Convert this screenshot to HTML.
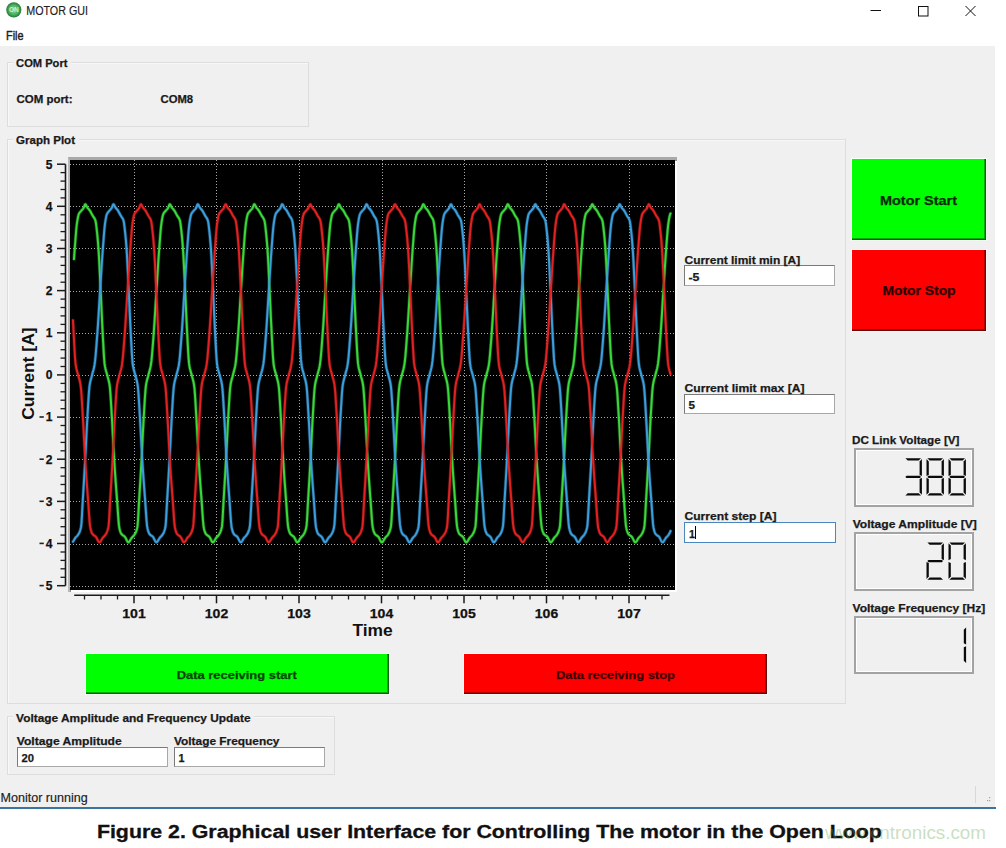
<!DOCTYPE html>
<html><head><meta charset="utf-8"><title>MOTOR GUI</title>
<style>
*{margin:0;padding:0;box-sizing:border-box}
html,body{width:1006px;height:848px;overflow:hidden;background:#fff}
body{position:relative;font-family:"Liberation Sans", sans-serif}
.a{position:absolute}
.win{left:0;top:46px;width:995px;height:761px;background:#f0f0f0}
.grp{border:1px solid #dddddd;box-shadow:inset 1px 1px 0 #f8f8f8}
.edit{background:#fff;border:1px solid #7a7a7a;border-bottom-color:#a8a8a8;border-right-color:#a8a8a8}
.btn-g{background:#00ff00;border-right:1px solid #006400;border-bottom:1px solid #006400;box-shadow:inset -1px -1px 0 #00a800, 0 0 0 1px #f8fff8}
.btn-r{background:#ff0000;border-right:1px solid #6a0000;border-bottom:1px solid #6a0000;box-shadow:inset -1px -1px 0 #b00000, 0 0 0 1px #fff8f8}
.lcd{border:2px solid #a3a3a3;box-shadow:inset 1px 1px 0 #fff, inset -1px -1px 0 #fff}
svg{position:absolute;left:0;top:0}
svg text{font-family:"Liberation Sans", sans-serif}
</style></head><body>
<div class="a win"></div>
<div class="a" style="left:0;top:807px;width:996px;height:2px;background:#3a74a0"></div>
<!-- group boxes -->
<div class="a grp" style="left:7px;top:62px;width:302px;height:65px"></div>
<div class="a grp" style="left:7px;top:139px;width:839px;height:565px"></div>
<div class="a grp" style="left:7px;top:716px;width:328px;height:59px"></div>
<!-- title gaps for group box labels -->
<div class="a" style="left:13px;top:56px;width:58px;height:12px;background:#f0f0f0"></div>
<div class="a" style="left:13px;top:133px;width:66px;height:12px;background:#f0f0f0"></div>
<div class="a" style="left:13px;top:710px;width:241px;height:12px;background:#f0f0f0"></div>
<!-- edits -->
<div class="a edit" style="left:684px;top:265px;width:151px;height:21px"></div>
<div class="a edit" style="left:684px;top:394px;width:151px;height:20px"></div>
<div class="a edit" style="left:684px;top:522px;width:152px;height:21px;border:1px solid #4a86bf"></div>
<div class="a edit" style="left:17px;top:747px;width:151px;height:20px"></div>
<div class="a edit" style="left:174px;top:747px;width:151px;height:20px"></div>
<!-- buttons -->
<div class="a btn-g" style="left:852px;top:159px;width:134px;height:81px"></div>
<div class="a btn-r" style="left:852px;top:250px;width:134px;height:81px"></div>
<div class="a btn-g" style="left:86px;top:654px;width:303px;height:40px"></div>
<div class="a btn-r" style="left:464px;top:654px;width:303px;height:40px"></div>
<!-- lcds -->
<div class="a lcd" style="left:854px;top:448px;width:120px;height:59px"></div>
<div class="a lcd" style="left:854px;top:532px;width:120px;height:59px"></div>
<div class="a lcd" style="left:854px;top:616px;width:120px;height:58px"></div>
<!-- plot canvas frame -->
<div class="a" style="left:68px;top:157px;width:609px;height:435px;background:#fff;border-top:3px solid #a8a8a8;border-left:2px solid #b8b8b8;box-shadow:inset 1px 1px 0 #909090"></div>
<div class="a" style="left:70px;top:160px;width:605px;height:430px;background:#000"></div>
<svg width="1006" height="848" viewBox="0 0 1006 848">
<!-- title bar icon -->
<defs><radialGradient id="ig" cx="0.5" cy="0.5" r="0.5"><stop offset="0" stop-color="#8fd69a"/><stop offset="0.6" stop-color="#4fb463"/><stop offset="1" stop-color="#237a38"/></radialGradient></defs>
<circle cx="13.8" cy="9.8" r="7.6" fill="url(#ig)"/>
<text x="13.8" y="12.3" font-size="6.5" font-weight="bold" fill="#c8f0d0" text-anchor="middle">ON</text>
<!-- window buttons -->
<line x1="870.5" y1="10.5" x2="881" y2="10.5" stroke="#111" stroke-width="1"/>
<rect x="918.5" y="6.5" width="9.5" height="9.5" fill="none" stroke="#111" stroke-width="1"/>
<path d="M965.5 6 L975.5 16 M975.5 6 L965.5 16" stroke="#111" stroke-width="1" fill="none"/>
<!-- status grip -->
<line x1="975.5" y1="786" x2="975.5" y2="803" stroke="#d8d8d8" stroke-width="1"/>
<g fill="#a0a0a0"><rect x="989" y="797" width="1.2" height="1.2"/><rect x="987" y="800" width="1.2" height="1.2"/><rect x="989" y="800" width="1.2" height="1.2"/></g>
<!-- grid -->
<g stroke="#a8a8a8" stroke-width="1" stroke-dasharray="1 2" shape-rendering="crispEdges">
<line x1="70.0" y1="586.5" x2="675.0" y2="586.5"/>
<line x1="70.0" y1="544.5" x2="675.0" y2="544.5"/>
<line x1="70.0" y1="501.5" x2="675.0" y2="501.5"/>
<line x1="70.0" y1="459.5" x2="675.0" y2="459.5"/>
<line x1="70.0" y1="417.5" x2="675.0" y2="417.5"/>
<line x1="70.0" y1="375.5" x2="675.0" y2="375.5"/>
<line x1="70.0" y1="333.5" x2="675.0" y2="333.5"/>
<line x1="70.0" y1="291.5" x2="675.0" y2="291.5"/>
<line x1="70.0" y1="248.5" x2="675.0" y2="248.5"/>
<line x1="70.0" y1="206.5" x2="675.0" y2="206.5"/>
<line x1="70.0" y1="164.5" x2="675.0" y2="164.5"/>
<line x1="134.5" y1="160.0" x2="134.5" y2="590.0"/>
<line x1="216.5" y1="160.0" x2="216.5" y2="590.0"/>
<line x1="299.5" y1="160.0" x2="299.5" y2="590.0"/>
<line x1="382.5" y1="160.0" x2="382.5" y2="590.0"/>
<line x1="464.5" y1="160.0" x2="464.5" y2="590.0"/>
<line x1="546.5" y1="160.0" x2="546.5" y2="590.0"/>
<line x1="629.5" y1="160.0" x2="629.5" y2="590.0"/>
</g>
<!-- waveforms -->
<g fill="none" stroke-width="3.4" stroke-linejoin="round" stroke-linecap="round" opacity="0.35">
<path d="M74.0,259.1 L74.5,252.0 L75.0,245.4 L75.5,238.8 L76.0,232.5 L76.5,227.0 L77.0,222.9 L77.5,219.8 L78.0,217.0 L78.5,214.9 L79.0,213.7 L79.5,212.8 L80.0,212.2 L80.5,211.6 L81.0,211.1 L81.5,210.5 L82.0,209.9 L82.5,209.4 L83.0,208.8 L83.5,208.1 L84.0,207.1 L84.5,205.7 L85.0,204.5 L85.5,204.3 L86.0,204.9 L86.5,205.9 L87.0,207.0 L87.5,207.8 L88.0,208.4 L88.5,208.9 L89.0,209.5 L89.5,210.1 L90.0,210.8 L90.5,211.6 L91.0,212.5 L91.5,213.5 L92.0,214.4 L92.5,215.3 L93.0,216.2 L93.5,216.9 L94.0,217.6 L94.5,218.4 L95.0,219.4 L95.5,220.8 L96.0,223.5 L96.5,227.5 L97.0,232.0 L97.5,236.9 L98.0,242.5 L98.5,249.1 L99.0,257.2 L99.5,266.7 L100.0,277.0 L100.5,287.4 L101.0,297.8 L101.5,308.7 L102.0,319.7 L102.5,329.9 L103.0,339.2 L103.5,348.6 L104.0,357.0 L104.5,363.2 L105.0,366.5 L105.5,368.9 L106.0,370.8 L106.5,372.5 L107.0,374.3 L107.5,376.3 L108.0,378.1 L108.5,379.8 L109.0,381.9 L109.5,384.5 L110.0,388.4 L110.5,394.8 L111.0,402.7 L111.5,411.2 L112.0,419.5 L112.5,428.4 L113.0,438.1 L113.5,447.7 L114.0,456.7 L114.5,464.6 L115.0,472.1 L115.5,479.2 L116.0,486.1 L116.5,492.8 L117.0,499.3 L117.5,506.2 L118.0,513.7 L118.5,520.6 L119.0,525.9 L119.5,528.7 L120.0,530.6 L120.5,532.1 L121.0,533.3 L121.5,534.0 L122.0,534.6 L122.5,535.0 L123.0,535.4 L123.5,535.7 L124.0,536.0 L124.5,536.5 L125.0,537.0 L125.5,537.8 L126.0,538.7 L126.5,539.8 L127.0,540.8 L127.5,541.6 L128.0,542.2 L128.5,542.3 L129.0,542.0 L129.5,541.4 L130.0,540.7 L130.5,539.8 L131.0,538.9 L131.5,538.1 L132.0,537.5 L132.5,537.0 L133.0,536.5 L133.5,536.0 L134.0,535.3 L134.5,534.6 L135.0,533.8 L135.5,532.9 L136.0,531.8 L136.5,530.4 L137.0,528.7 L137.5,526.4 L138.0,520.7 L138.5,511.6 L139.0,502.3 L139.5,494.1 L140.0,485.9 L140.5,477.5 L141.0,469.0 L141.5,460.2 L142.0,450.8 L142.5,440.8 L143.0,430.8 L143.5,421.4 L144.0,413.0 L144.5,404.4 L145.0,396.3 L145.5,389.6 L146.0,385.2 L146.5,382.4 L147.0,380.2 L147.5,378.4 L148.0,376.7 L148.5,374.8 L149.0,372.8 L149.5,371.0 L150.0,369.1 L150.5,366.9 L151.0,364.1 L151.5,360.2 L152.0,355.2 L152.5,349.2 L153.0,342.8 L153.5,336.1 L154.0,329.4 L154.5,322.1 L155.0,314.1 L155.5,305.9 L156.0,297.8 L156.5,289.9 L157.0,282.1 L157.5,274.2 L158.0,266.5 L158.5,258.9 L159.0,251.8 L159.5,245.2 L160.0,238.6 L160.5,232.4 L161.0,226.9 L161.5,222.9 L162.0,219.7 L162.5,217.0 L163.0,214.9 L163.5,213.6 L164.0,212.8 L164.5,212.2 L165.0,211.6 L165.5,211.0 L166.0,210.5 L166.5,209.9 L167.0,209.4 L167.5,208.8 L168.0,208.1 L168.5,207.1 L169.0,205.7 L169.5,204.5 L170.0,204.3 L170.5,204.9 L171.0,205.9 L171.5,207.0 L172.0,207.8 L172.5,208.4 L173.0,208.9 L173.5,209.5 L174.0,210.1 L174.5,210.8 L175.0,211.6 L175.5,212.5 L176.0,213.5 L176.5,214.4 L177.0,215.4 L177.5,216.2 L178.0,216.9 L178.5,217.6 L179.0,218.4 L179.5,219.5 L180.0,220.9 L180.5,223.6 L181.0,227.6 L181.5,232.1 L182.0,237.0 L182.5,242.6 L183.0,249.2 L183.5,257.4 L184.0,266.9 L184.5,277.2 L185.0,287.6 L185.5,298.0 L186.0,309.0 L186.5,319.9 L187.0,330.1 L187.5,339.4 L188.0,348.8 L188.5,357.2 L189.0,363.2 L189.5,366.6 L190.0,369.0 L190.5,370.8 L191.0,372.5 L191.5,374.3 L192.0,376.3 L192.5,378.1 L193.0,379.9 L193.5,381.9 L194.0,384.6 L194.5,388.5 L195.0,394.9 L195.5,402.8 L196.0,411.3 L196.5,419.6 L197.0,428.6 L197.5,438.3 L198.0,447.9 L198.5,456.8 L199.0,464.8 L199.5,472.2 L200.0,479.4 L200.5,486.2 L201.0,492.9 L201.5,499.5 L202.0,506.4 L202.5,513.8 L203.0,520.7 L203.5,525.9 L204.0,528.7 L204.5,530.7 L205.0,532.2 L205.5,533.3 L206.0,534.1 L206.5,534.6 L207.0,535.0 L207.5,535.4 L208.0,535.7 L208.5,536.1 L209.0,536.5 L209.5,537.0 L210.0,537.8 L210.5,538.8 L211.0,539.8 L211.5,540.8 L212.0,541.7 L212.5,542.2 L213.0,542.3 L213.5,542.0 L214.0,541.4 L214.5,540.6 L215.0,539.8 L215.5,538.9 L216.0,538.1 L216.5,537.5 L217.0,537.0 L217.5,536.5 L218.0,536.0 L218.5,535.3 L219.0,534.6 L219.5,533.8 L220.0,532.9 L220.5,531.8 L221.0,530.4 L221.5,528.6 L222.0,526.4 L222.5,520.6 L223.0,511.4 L223.5,502.1 L224.0,494.0 L224.5,485.7 L225.0,477.4 L225.5,468.8 L226.0,460.0 L226.5,450.6 L227.0,440.6 L227.5,430.6 L228.0,421.3 L228.5,412.8 L229.0,404.2 L229.5,396.2 L230.0,389.5 L230.5,385.1 L231.0,382.3 L231.5,380.2 L232.0,378.4 L232.5,376.7 L233.0,374.7 L233.5,372.8 L234.0,371.0 L234.5,369.1 L235.0,366.8 L235.5,364.1 L236.0,360.1 L236.5,355.1 L237.0,349.1 L237.5,342.7 L238.0,336.0 L238.5,329.3 L239.0,321.9 L239.5,314.0 L240.0,305.8 L240.5,297.6 L241.0,289.8 L241.5,282.0 L242.0,274.1 L242.5,266.3 L243.0,258.8 L243.5,251.7 L244.0,245.1 L244.5,238.5 L245.0,232.2 L245.5,226.8 L246.0,222.8 L246.5,219.6 L247.0,216.9 L247.5,214.9 L248.0,213.6 L248.5,212.8 L249.0,212.2 L249.5,211.6 L250.0,211.0 L250.5,210.4 L251.0,209.9 L251.5,209.4 L252.0,208.8 L252.5,208.1 L253.0,207.0 L253.5,205.6 L254.0,204.5 L254.5,204.3 L255.0,204.9 L255.5,205.9 L256.0,207.0 L256.5,207.8 L257.0,208.4 L257.5,208.9 L258.0,209.5 L258.5,210.1 L259.0,210.8 L259.5,211.7 L260.0,212.6 L260.5,213.5 L261.0,214.4 L261.5,215.4 L262.0,216.2 L262.5,216.9 L263.0,217.6 L263.5,218.5 L264.0,219.5 L264.5,220.9 L265.0,223.6 L265.5,227.7 L266.0,232.2 L266.5,237.1 L267.0,242.8 L267.5,249.4 L268.0,257.5 L268.5,267.1 L269.0,277.4 L269.5,287.8 L270.0,298.2 L270.5,309.2 L271.0,320.1 L271.5,330.2 L272.0,339.6 L272.5,349.0 L273.0,357.3 L273.5,363.3 L274.0,366.6 L274.5,369.0 L275.0,370.9 L275.5,372.6 L276.0,374.4 L276.5,376.4 L277.0,378.1 L277.5,379.9 L278.0,382.0 L278.5,384.6 L279.0,388.6 L279.5,395.1 L280.0,403.0 L280.5,411.5 L281.0,419.8 L281.5,428.8 L282.0,438.5 L282.5,448.1 L283.0,457.0 L283.5,464.9 L284.0,472.4 L284.5,479.5 L285.0,486.3 L285.5,493.0 L286.0,499.6 L286.5,506.5 L287.0,514.0 L287.5,520.9 L288.0,526.0 L288.5,528.7 L289.0,530.7 L289.5,532.2 L290.0,533.3 L290.5,534.1 L291.0,534.6 L291.5,535.1 L292.0,535.4 L292.5,535.7 L293.0,536.1 L293.5,536.5 L294.0,537.0 L294.5,537.8 L295.0,538.8 L295.5,539.8 L296.0,540.8 L296.5,541.7 L297.0,542.2 L297.5,542.3 L298.0,542.0 L298.5,541.4 L299.0,540.6 L299.5,539.8 L300.0,538.9 L300.5,538.1 L301.0,537.5 L301.5,536.9 L302.0,536.5 L302.5,535.9 L303.0,535.3 L303.5,534.6 L304.0,533.8 L304.5,532.9 L305.0,531.8 L305.5,530.4 L306.0,528.6 L306.5,526.3 L307.0,520.4 L307.5,511.3 L308.0,502.0 L308.5,493.8 L309.0,485.6 L309.5,477.2 L310.0,468.7 L310.5,459.8 L311.0,450.4 L311.5,440.4 L312.0,430.5 L312.5,421.1 L313.0,412.6 L313.5,404.1 L314.0,396.0 L314.5,389.4 L315.0,385.1 L315.5,382.3 L316.0,380.2 L316.5,378.4 L317.0,376.6 L317.5,374.7 L318.0,372.7 L318.5,370.9 L319.0,369.0 L319.5,366.8 L320.0,364.0 L320.5,360.0 L321.0,354.9 L321.5,349.0 L322.0,342.5 L322.5,335.9 L323.0,329.2 L323.5,321.7 L324.0,313.8 L324.5,305.6 L325.0,297.4 L325.5,289.6 L326.0,281.8 L326.5,273.9 L327.0,266.1 L327.5,258.6 L328.0,251.6 L328.5,245.0 L329.0,238.4 L329.5,232.1 L330.0,226.8 L330.5,222.7 L331.0,219.6 L331.5,216.9 L332.0,214.8 L332.5,213.6 L333.0,212.8 L333.5,212.1 L334.0,211.6 L334.5,211.0 L335.0,210.4 L335.5,209.9 L336.0,209.4 L336.5,208.8 L337.0,208.1 L337.5,207.0 L338.0,205.6 L338.5,204.5 L339.0,204.3 L339.5,204.9 L340.0,206.0 L340.5,207.1 L341.0,207.8 L341.5,208.4 L342.0,209.0 L342.5,209.5 L343.0,210.1 L343.5,210.8 L344.0,211.7 L344.5,212.6 L345.0,213.5 L345.5,214.5 L346.0,215.4 L346.5,216.2 L347.0,216.9 L347.5,217.7 L348.0,218.5 L348.5,219.5 L349.0,220.9 L349.5,223.7 L350.0,227.8 L350.5,232.3 L351.0,237.2 L351.5,242.9 L352.0,249.5 L352.5,257.7 L353.0,267.3 L353.5,277.6 L354.0,288.1 L354.5,298.4 L355.0,309.4 L355.5,320.3 L356.0,330.4 L356.5,339.7 L357.0,349.1 L357.5,357.5 L358.0,363.4 L358.5,366.7 L359.0,369.0 L359.5,370.9 L360.0,372.6 L360.5,374.4 L361.0,376.4 L361.5,378.2 L362.0,379.9 L362.5,382.0 L363.0,384.7 L363.5,388.8 L364.0,395.2 L364.5,403.2 L365.0,411.7 L365.5,420.0 L366.0,429.0 L366.5,438.7 L367.0,448.3 L367.5,457.2 L368.0,465.1 L368.5,472.5 L369.0,479.6 L369.5,486.5 L370.0,493.2 L370.5,499.7 L371.0,506.6 L371.5,514.1 L372.0,521.0 L372.5,526.1 L373.0,528.8 L373.5,530.7 L374.0,532.2 L374.5,533.3 L375.0,534.1 L375.5,534.6 L376.0,535.1 L376.5,535.4 L377.0,535.7 L377.5,536.1 L378.0,536.5 L378.5,537.0 L379.0,537.8 L379.5,538.8 L380.0,539.9 L380.5,540.9 L381.0,541.7 L381.5,542.2 L382.0,542.3 L382.5,542.0 L383.0,541.4 L383.5,540.6 L384.0,539.7 L384.5,538.9 L385.0,538.1 L385.5,537.4 L386.0,536.9 L386.5,536.4 L387.0,535.9 L387.5,535.3 L388.0,534.6 L388.5,533.8 L389.0,532.8 L389.5,531.7 L390.0,530.3 L390.5,528.5 L391.0,526.2 L391.5,520.2 L392.0,511.1 L392.5,501.8 L393.0,493.6 L393.5,485.4 L394.0,477.0 L394.5,468.5 L395.0,459.7 L395.5,450.2 L396.0,440.2 L396.5,430.3 L397.0,420.9 L397.5,412.4 L398.0,403.9 L398.5,395.9 L399.0,389.3 L399.5,385.0 L400.0,382.2 L400.5,380.1 L401.0,378.3 L401.5,376.6 L402.0,374.6 L402.5,372.7 L403.0,370.9 L403.5,369.0 L404.0,366.7 L404.5,363.9 L405.0,360.0 L405.5,354.8 L406.0,348.9 L406.5,342.4 L407.0,335.7 L407.5,329.0 L408.0,321.6 L408.5,313.6 L409.0,305.4 L409.5,297.3 L410.0,289.4 L410.5,281.6 L411.0,273.8 L411.5,266.0 L412.0,258.5 L412.5,251.4 L413.0,244.8 L413.5,238.2 L414.0,232.0 L414.5,226.7 L415.0,222.7 L415.5,219.5 L416.0,216.8 L416.5,214.8 L417.0,213.6 L417.5,212.8 L418.0,212.1 L418.5,211.6 L419.0,211.0 L419.5,210.4 L420.0,209.9 L420.5,209.3 L421.0,208.8 L421.5,208.1 L422.0,207.0 L422.5,205.6 L423.0,204.5 L423.5,204.3 L424.0,204.9 L424.5,206.0 L425.0,207.1 L425.5,207.9 L426.0,208.4 L426.5,209.0 L427.0,209.5 L427.5,210.1 L428.0,210.9 L428.5,211.7 L429.0,212.6 L429.5,213.5 L430.0,214.5 L430.5,215.4 L431.0,216.2 L431.5,217.0 L432.0,217.7 L432.5,218.5 L433.0,219.5 L433.5,221.0 L434.0,223.8 L434.5,227.9 L435.0,232.4 L435.5,237.3 L436.0,243.0 L436.5,249.7 L437.0,257.9 L437.5,267.5 L438.0,277.9 L438.5,288.3 L439.0,298.6 L439.5,309.6 L440.0,320.5 L440.5,330.6 L441.0,339.9 L441.5,349.3 L442.0,357.6 L442.5,363.5 L443.0,366.7 L443.5,369.1 L444.0,371.0 L444.5,372.6 L445.0,374.5 L445.5,376.4 L446.0,378.2 L446.5,380.0 L447.0,382.1 L447.5,384.7 L448.0,388.9 L448.5,395.3 L449.0,403.3 L449.5,411.8 L450.0,420.1 L450.5,429.2 L451.0,438.9 L451.5,448.4 L452.0,457.3 L452.5,465.2 L453.0,472.7 L453.5,479.8 L454.0,486.6 L454.5,493.3 L455.0,499.9 L455.5,506.8 L456.0,514.2 L456.5,521.1 L457.0,526.2 L457.5,528.8 L458.0,530.8 L458.5,532.3 L459.0,533.4 L459.5,534.1 L460.0,534.6 L460.5,535.1 L461.0,535.4 L461.5,535.7 L462.0,536.1 L462.5,536.5 L463.0,537.0 L463.5,537.8 L464.0,538.8 L464.5,539.9 L465.0,540.9 L465.5,541.7 L466.0,542.2 L466.5,542.3 L467.0,542.0 L467.5,541.4 L468.0,540.6 L468.5,539.7 L469.0,538.9 L469.5,538.1 L470.0,537.4 L470.5,536.9 L471.0,536.4 L471.5,535.9 L472.0,535.3 L472.5,534.5 L473.0,533.7 L473.5,532.8 L474.0,531.7 L474.5,530.3 L475.0,528.5 L475.5,526.2 L476.0,520.1 L476.5,510.9 L477.0,501.6 L477.5,493.5 L478.0,485.2 L478.5,476.9 L479.0,468.3 L479.5,459.5 L480.0,450.0 L480.5,440.0 L481.0,430.1 L481.5,420.7 L482.0,412.3 L482.5,403.7 L483.0,395.7 L483.5,389.2 L484.0,384.9 L484.5,382.2 L485.0,380.1 L485.5,378.3 L486.0,376.6 L486.5,374.6 L487.0,372.7 L487.5,370.9 L488.0,368.9 L488.5,366.7 L489.0,363.9 L489.5,359.9 L490.0,354.7 L490.5,348.7 L491.0,342.3 L491.5,335.6 L492.0,328.9 L492.5,321.4 L493.0,313.5 L493.5,305.3 L494.0,297.1 L494.5,289.3 L495.0,281.5 L495.5,273.6 L496.0,265.8 L496.5,258.3 L497.0,251.3 L497.5,244.7 L498.0,238.1 L498.5,231.9 L499.0,226.6 L499.5,222.6 L500.0,219.5 L500.5,216.8 L501.0,214.8 L501.5,213.6 L502.0,212.7 L502.5,212.1 L503.0,211.6 L503.5,211.0 L504.0,210.4 L504.5,209.9 L505.0,209.3 L505.5,208.7 L506.0,208.1 L506.5,206.9 L507.0,205.5 L507.5,204.5 L508.0,204.3 L508.5,205.0 L509.0,206.0 L509.5,207.1 L510.0,207.9 L510.5,208.4 L511.0,209.0 L511.5,209.5 L512.0,210.1 L512.5,210.9 L513.0,211.7 L513.5,212.6 L514.0,213.6 L514.5,214.5 L515.0,215.4 L515.5,216.3 L516.0,217.0 L516.5,217.7 L517.0,218.5 L517.5,219.6 L518.0,221.0 L518.5,223.9 L519.0,228.0 L519.5,232.5 L520.0,237.4 L520.5,243.1 L521.0,249.8 L521.5,258.1 L522.0,267.7 L522.5,278.1 L523.0,288.5 L523.5,298.8 L524.0,309.8 L524.5,320.7 L525.0,330.8 L525.5,340.1 L526.0,349.5 L526.5,357.7 L527.0,363.6 L527.5,366.8 L528.0,369.1 L528.5,371.0 L529.0,372.7 L529.5,374.5 L530.0,376.5 L530.5,378.2 L531.0,380.0 L531.5,382.1 L532.0,384.8 L532.5,389.0 L533.0,395.5 L533.5,403.5 L534.0,412.0 L534.5,420.3 L535.0,429.4 L535.5,439.0 L536.0,448.6 L536.5,457.5 L537.0,465.4 L537.5,472.8 L538.0,479.9 L538.5,486.8 L539.0,493.4 L539.5,500.0 L540.0,506.9 L540.5,514.4 L541.0,521.2 L541.5,526.3 L542.0,528.9 L542.5,530.8 L543.0,532.3 L543.5,533.4 L544.0,534.1 L544.5,534.7 L545.0,535.1 L545.5,535.4 L546.0,535.7 L546.5,536.1 L547.0,536.5 L547.5,537.0 L548.0,537.9 L548.5,538.9 L549.0,539.9 L549.5,540.9 L550.0,541.7 L550.5,542.2 L551.0,542.3 L551.5,541.9 L552.0,541.4 L552.5,540.6 L553.0,539.7 L553.5,538.8 L554.0,538.1 L554.5,537.4 L555.0,536.9 L555.5,536.4 L556.0,535.9 L556.5,535.3 L557.0,534.5 L557.5,533.7 L558.0,532.8 L558.5,531.7 L559.0,530.3 L559.5,528.5 L560.0,526.1 L560.5,519.9 L561.0,510.7 L561.5,501.5 L562.0,493.3 L562.5,485.1 L563.0,476.7 L563.5,468.1 L564.0,459.3 L564.5,449.9 L565.0,439.8 L565.5,429.9 L566.0,420.6 L566.5,412.1 L567.0,403.6 L567.5,395.6 L568.0,389.1 L568.5,384.9 L569.0,382.1 L569.5,380.0 L570.0,378.3 L570.5,376.5 L571.0,374.5 L571.5,372.6 L572.0,370.8 L572.5,368.9 L573.0,366.6 L573.5,363.8 L574.0,359.8 L574.5,354.6 L575.0,348.6 L575.5,342.1 L576.0,335.5 L576.5,328.7 L577.0,321.3 L577.5,313.3 L578.0,305.1 L578.5,297.0 L579.0,289.1 L579.5,281.3 L580.0,273.5 L580.5,265.7 L581.0,258.2 L581.5,251.2 L582.0,244.6 L582.5,238.0 L583.0,231.8 L583.5,226.5 L584.0,222.5 L584.5,219.4 L585.0,216.7 L585.5,214.7 L586.0,213.5 L586.5,212.7 L587.0,212.1 L587.5,211.6 L588.0,211.0 L588.5,210.4 L589.0,209.9 L589.5,209.3 L590.0,208.7 L590.5,208.0 L591.0,206.9 L591.5,205.5 L592.0,204.5 L592.5,204.3 L593.0,205.0 L593.5,206.0 L594.0,207.1 L594.5,207.9 L595.0,208.5 L595.5,209.0 L596.0,209.5 L596.5,210.1 L597.0,210.9 L597.5,211.7 L598.0,212.6 L598.5,213.6 L599.0,214.5 L599.5,215.4 L600.0,216.3 L600.5,217.0 L601.0,217.7 L601.5,218.5 L602.0,219.6 L602.5,221.0 L603.0,223.9 L603.5,228.1 L604.0,232.6 L604.5,237.5 L605.0,243.3 L605.5,250.0 L606.0,258.3 L606.5,267.9 L607.0,278.3 L607.5,288.7 L608.0,299.1 L608.5,310.1 L609.0,321.0 L609.5,331.0 L610.0,340.3 L610.5,349.7 L611.0,357.9 L611.5,363.7 L612.0,366.8 L612.5,369.2 L613.0,371.0 L613.5,372.7 L614.0,374.5 L614.5,376.5 L615.0,378.3 L615.5,380.0 L616.0,382.1 L616.5,384.9 L617.0,389.1 L617.5,395.6 L618.0,403.7 L618.5,412.2 L619.0,420.5 L619.5,429.6 L620.0,439.2 L620.5,448.8 L621.0,457.7 L621.5,465.5 L622.0,473.0 L622.5,480.1 L623.0,486.9 L623.5,493.6 L624.0,500.1 L624.5,507.1 L625.0,514.5 L625.5,521.3 L626.0,526.3 L626.5,528.9 L627.0,530.8 L627.5,532.3 L628.0,533.4 L628.5,534.1 L629.0,534.7 L629.5,535.1 L630.0,535.4 L630.5,535.7 L631.0,536.1 L631.5,536.5 L632.0,537.1 L632.5,537.9 L633.0,538.9 L633.5,539.9 L634.0,540.9 L634.5,541.7 L635.0,542.2 L635.5,542.3 L636.0,541.9 L636.5,541.3 L637.0,540.6 L637.5,539.7 L638.0,538.8 L638.5,538.0 L639.0,537.4 L639.5,536.9 L640.0,536.4 L640.5,535.9 L641.0,535.3 L641.5,534.5 L642.0,533.7 L642.5,532.8 L643.0,531.7 L643.5,530.2 L644.0,528.4 L644.5,526.0 L645.0,519.7 L645.5,510.5 L646.0,501.3 L646.5,493.1 L647.0,484.9 L647.5,476.5 L648.0,468.0 L648.5,459.1 L649.0,449.7 L649.5,439.6 L650.0,429.7 L650.5,420.4 L651.0,411.9 L651.5,403.4 L652.0,395.4 L652.5,389.0 L653.0,384.8 L653.5,382.1 L654.0,380.0 L654.5,378.2 L655.0,376.5 L655.5,374.5 L656.0,372.6 L656.5,370.8 L657.0,368.9 L657.5,366.6 L658.0,363.7 L658.5,359.7 L659.0,354.5 L659.5,348.5 L660.0,342.0 L660.5,335.3 L661.0,328.6 L661.5,321.1 L662.0,313.2 L662.5,304.9 L663.0,296.8 L663.5,289.0 L664.0,281.2 L664.5,273.3 L665.0,265.5 L665.5,258.1 L666.0,251.0 L666.5,244.4 L667.0,237.8 L667.5,231.7 L668.0,226.4 L668.5,222.5 L669.0,219.3 L669.5,216.7 L670.0,214.7 L670.5,213.5" stroke="#3ad83a"/>
<path d="M73.0,541.6 L73.5,540.9 L74.0,540.1 L74.5,539.2 L75.0,538.4 L75.5,537.7 L76.0,537.1 L76.5,536.6 L77.0,536.1 L77.5,535.6 L78.0,534.8 L78.5,534.1 L79.0,533.2 L79.5,532.2 L80.0,530.9 L80.5,529.3 L81.0,527.2 L81.5,523.1 L82.0,514.7 L82.5,505.1 L83.0,496.7 L83.5,488.5 L84.0,480.2 L84.5,471.7 L85.0,462.9 L85.5,453.8 L86.0,443.9 L86.5,433.8 L87.0,424.2 L87.5,415.5 L88.0,406.9 L88.5,398.6 L89.0,391.4 L89.5,386.2 L90.0,383.1 L90.5,380.8 L91.0,378.9 L91.5,377.2 L92.0,375.3 L92.5,373.3 L93.0,371.5 L93.5,369.7 L94.0,367.6 L94.5,365.0 L95.0,361.4 L95.5,356.7 L96.0,350.9 L96.5,344.6 L97.0,337.9 L97.5,331.3 L98.0,324.1 L98.5,316.3 L99.0,308.1 L99.5,299.9 L100.0,291.9 L100.5,284.2 L101.0,276.3 L101.5,268.4 L102.0,260.8 L102.5,253.6 L103.0,246.9 L103.5,240.3 L104.0,233.9 L104.5,228.2 L105.0,223.7 L105.5,220.4 L106.0,217.6 L106.5,215.3 L107.0,213.9 L107.5,213.0 L108.0,212.3 L108.5,211.7 L109.0,211.2 L109.5,210.6 L110.0,210.0 L110.5,209.5 L111.0,208.9 L111.5,208.3 L112.0,207.3 L112.5,206.0 L113.0,204.7 L113.5,204.2 L114.0,204.7 L114.5,205.7 L115.0,206.8 L115.5,207.7 L116.0,208.3 L116.5,208.8 L117.0,209.3 L117.5,209.9 L118.0,210.6 L118.5,211.5 L119.0,212.4 L119.5,213.3 L120.0,214.2 L120.5,215.2 L121.0,216.0 L121.5,216.8 L122.0,217.5 L122.5,218.3 L123.0,219.2 L123.5,220.5 L124.0,222.9 L124.5,226.8 L125.0,231.3 L125.5,236.0 L126.0,241.5 L126.5,248.0 L127.0,255.8 L127.5,265.1 L128.0,275.4 L128.5,285.9 L129.0,296.1 L129.5,307.1 L130.0,318.1 L130.5,328.4 L131.0,337.8 L131.5,347.3 L132.0,355.9 L132.5,362.5 L133.0,366.1 L133.5,368.6 L134.0,370.6 L134.5,372.3 L135.0,374.1 L135.5,376.1 L136.0,377.8 L136.5,379.6 L137.0,381.6 L137.5,384.1 L138.0,387.8 L138.5,393.9 L139.0,401.6 L139.5,410.1 L140.0,418.5 L140.5,427.4 L141.0,437.0 L141.5,446.6 L142.0,455.7 L142.5,463.8 L143.0,471.3 L143.5,478.5 L144.0,485.4 L144.5,492.1 L145.0,498.7 L145.5,505.5 L146.0,512.9 L146.5,520.0 L147.0,525.5 L147.5,528.4 L148.0,530.5 L148.5,532.0 L149.0,533.2 L149.5,534.0 L150.0,534.6 L150.5,535.0 L151.0,535.4 L151.5,535.7 L152.0,536.0 L152.5,536.4 L153.0,536.9 L153.5,537.7 L154.0,538.7 L154.5,539.7 L155.0,540.7 L155.5,541.6 L156.0,542.1 L156.5,542.3 L157.0,542.0 L157.5,541.5 L158.0,540.7 L158.5,539.9 L159.0,539.0 L159.5,538.2 L160.0,537.5 L160.5,537.0 L161.0,536.5 L161.5,536.0 L162.0,535.4 L162.5,534.6 L163.0,533.9 L163.5,533.0 L164.0,531.9 L164.5,530.5 L165.0,528.7 L165.5,526.6 L166.0,521.0 L166.5,512.0 L167.0,502.6 L167.5,494.4 L168.0,486.2 L168.5,477.8 L169.0,469.3 L169.5,460.5 L170.0,451.1 L170.5,441.1 L171.0,431.1 L171.5,421.6 L172.0,413.1 L172.5,404.5 L173.0,396.4 L173.5,389.7 L174.0,385.2 L174.5,382.4 L175.0,380.3 L175.5,378.4 L176.0,376.7 L176.5,374.8 L177.0,372.8 L177.5,371.0 L178.0,369.1 L178.5,366.9 L179.0,364.1 L179.5,360.2 L180.0,355.1 L180.5,349.2 L181.0,342.7 L181.5,336.1 L182.0,329.4 L182.5,322.0 L183.0,314.0 L183.5,305.8 L184.0,297.6 L184.5,289.8 L185.0,282.0 L185.5,274.1 L186.0,266.3 L186.5,258.7 L187.0,251.7 L187.5,245.0 L188.0,238.4 L188.5,232.2 L189.0,226.8 L189.5,222.8 L190.0,219.6 L190.5,216.9 L191.0,214.8 L191.5,213.6 L192.0,212.8 L192.5,212.1 L193.0,211.6 L193.5,211.0 L194.0,210.4 L194.5,209.9 L195.0,209.4 L195.5,208.8 L196.0,208.1 L196.5,207.0 L197.0,205.6 L197.5,204.5 L198.0,204.3 L198.5,204.9 L199.0,206.0 L199.5,207.1 L200.0,207.9 L200.5,208.4 L201.0,209.0 L201.5,209.5 L202.0,210.1 L202.5,210.9 L203.0,211.7 L203.5,212.6 L204.0,213.6 L204.5,214.5 L205.0,215.4 L205.5,216.3 L206.0,217.0 L206.5,217.7 L207.0,218.5 L207.5,219.6 L208.0,221.0 L208.5,223.9 L209.0,228.0 L209.5,232.5 L210.0,237.5 L210.5,243.2 L211.0,250.0 L211.5,258.3 L212.0,268.0 L212.5,278.3 L213.0,288.7 L213.5,299.1 L214.0,310.2 L214.5,321.1 L215.0,331.1 L215.5,340.5 L216.0,349.8 L216.5,358.0 L217.0,363.8 L217.5,366.9 L218.0,369.2 L218.5,371.1 L219.0,372.8 L219.5,374.6 L220.0,376.6 L220.5,378.3 L221.0,380.1 L221.5,382.2 L222.0,385.0 L222.5,389.3 L223.0,395.9 L223.5,404.0 L224.0,412.5 L224.5,420.8 L225.0,430.0 L225.5,439.7 L226.0,449.3 L226.5,458.1 L227.0,465.9 L227.5,473.3 L228.0,480.4 L228.5,487.3 L229.0,493.9 L229.5,500.5 L230.0,507.5 L230.5,515.0 L231.0,521.7 L231.5,526.6 L232.0,529.1 L232.5,530.9 L233.0,532.4 L233.5,533.4 L234.0,534.2 L234.5,534.7 L235.0,535.1 L235.5,535.5 L236.0,535.8 L236.5,536.1 L237.0,536.5 L237.5,537.1 L238.0,538.0 L238.5,539.0 L239.0,540.0 L239.5,541.0 L240.0,541.8 L240.5,542.2 L241.0,542.2 L241.5,541.9 L242.0,541.3 L242.5,540.5 L243.0,539.6 L243.5,538.7 L244.0,538.0 L244.5,537.4 L245.0,536.9 L245.5,536.4 L246.0,535.8 L246.5,535.2 L247.0,534.4 L247.5,533.6 L248.0,532.7 L248.5,531.5 L249.0,530.0 L249.5,528.2 L250.0,525.5 L250.5,518.7 L251.0,509.3 L251.5,500.3 L252.0,492.1 L252.5,483.8 L253.0,475.4 L253.5,466.8 L254.0,457.9 L254.5,448.3 L255.0,438.3 L255.5,428.3 L256.0,419.2 L256.5,410.7 L257.0,402.2 L257.5,394.4 L258.0,388.2 L258.5,384.4 L259.0,381.8 L259.5,379.7 L260.0,378.0 L260.5,376.2 L261.0,374.2 L261.5,372.3 L262.0,370.5 L262.5,368.5 L263.0,366.2 L263.5,363.2 L264.0,358.9 L264.5,353.5 L265.0,347.4 L265.5,340.9 L266.0,334.2 L266.5,327.4 L267.0,319.8 L267.5,311.7 L268.0,303.5 L268.5,295.4 L269.0,287.6 L269.5,279.7 L270.0,271.9 L270.5,264.1 L271.0,256.7 L271.5,249.8 L272.0,243.2 L272.5,236.6 L273.0,230.6 L273.5,225.5 L274.0,221.8 L274.5,218.8 L275.0,216.2 L275.5,214.4 L276.0,213.3 L276.5,212.6 L277.0,212.0 L277.5,211.4 L278.0,210.8 L278.5,210.3 L279.0,209.7 L279.5,209.2 L280.0,208.6 L280.5,207.8 L281.0,206.6 L281.5,205.2 L282.0,204.3 L282.5,204.4 L283.0,205.2 L283.5,206.3 L284.0,207.3 L284.5,208.0 L285.0,208.6 L285.5,209.1 L286.0,209.7 L286.5,210.3 L287.0,211.1 L287.5,212.0 L288.0,212.9 L288.5,213.8 L289.0,214.8 L289.5,215.7 L290.0,216.5 L290.5,217.2 L291.0,217.9 L291.5,218.8 L292.0,219.9 L292.5,221.7 L293.0,225.0 L293.5,229.3 L294.0,233.8 L294.5,239.0 L295.0,245.0 L295.5,252.1 L296.0,260.9 L296.5,270.8 L297.0,281.3 L297.5,291.6 L298.0,302.2 L298.5,313.3 L299.0,324.0 L299.5,333.7 L300.0,343.1 L300.5,352.3 L301.0,359.9 L301.5,364.8 L302.0,367.6 L302.5,369.8 L303.0,371.5 L303.5,373.2 L304.0,375.2 L304.5,377.1 L305.0,378.8 L305.5,380.6 L306.0,382.9 L306.5,385.9 L307.0,390.9 L307.5,398.1 L308.0,406.4 L308.5,414.9 L309.0,423.3 L309.5,432.7 L310.0,442.4 L310.5,451.8 L311.0,460.3 L311.5,468.0 L312.0,475.4 L312.5,482.4 L313.0,489.1 L313.5,495.8 L314.0,502.4 L314.5,509.6 L315.0,517.0 L315.5,523.3 L316.0,527.4 L316.5,529.6 L317.0,531.4 L317.5,532.7 L318.0,533.7 L318.5,534.3 L319.0,534.8 L319.5,535.2 L320.0,535.5 L320.5,535.9 L321.0,536.2 L321.5,536.7 L322.0,537.3 L322.5,538.2 L323.0,539.3 L323.5,540.3 L324.0,541.2 L324.5,541.9 L325.0,542.3 L325.5,542.2 L326.0,541.7 L326.5,541.1 L327.0,540.2 L327.5,539.4 L328.0,538.5 L328.5,537.8 L329.0,537.2 L329.5,536.7 L330.0,536.2 L330.5,535.7 L331.0,535.0 L331.5,534.2 L332.0,533.4 L332.5,532.4 L333.0,531.1 L333.5,529.6 L334.0,527.6 L334.5,524.1 L335.0,516.2 L335.5,506.6 L336.0,498.0 L336.5,489.8 L337.0,481.5 L337.5,473.0 L338.0,464.4 L338.5,455.3 L339.0,445.5 L339.5,435.4 L340.0,425.7 L340.5,416.8 L341.0,408.3 L341.5,399.9 L342.0,392.4 L342.5,386.9 L343.0,383.6 L343.5,381.1 L344.0,379.2 L344.5,377.5 L345.0,375.7 L345.5,373.6 L346.0,371.8 L346.5,370.0 L347.0,367.9 L347.5,365.4 L348.0,362.1 L348.5,357.5 L349.0,351.9 L349.5,345.6 L350.0,339.0 L350.5,332.4 L351.0,325.3 L351.5,317.6 L352.0,309.4 L352.5,301.2 L353.0,293.2 L353.5,285.4 L354.0,277.5 L354.5,269.7 L355.0,262.0 L355.5,254.7 L356.0,247.9 L356.5,241.3 L357.0,234.8 L357.5,229.0 L358.0,224.3 L358.5,220.9 L359.0,218.0 L359.5,215.6 L360.0,214.1 L360.5,213.1 L361.0,212.4 L361.5,211.8 L362.0,211.3 L362.5,210.7 L363.0,210.1 L363.5,209.6 L364.0,209.0 L364.5,208.4 L365.0,207.5 L365.5,206.2 L366.0,204.9 L366.5,204.2 L367.0,204.6 L367.5,205.5 L368.0,206.6 L368.5,207.6 L369.0,208.2 L369.5,208.7 L370.0,209.3 L370.5,209.8 L371.0,210.5 L371.5,211.3 L372.0,212.2 L372.5,213.1 L373.0,214.1 L373.5,215.0 L374.0,215.9 L374.5,216.7 L375.0,217.4 L375.5,218.1 L376.0,219.1 L376.5,220.3 L377.0,222.4 L377.5,226.1 L378.0,230.6 L378.5,235.2 L379.0,240.6 L379.5,246.9 L380.0,254.4 L380.5,263.6 L381.0,273.7 L381.5,284.2 L382.0,294.5 L382.5,305.3 L383.0,316.3 L383.5,326.9 L384.0,336.3 L384.5,345.8 L385.0,354.6 L385.5,361.6 L386.0,365.6 L386.5,368.3 L387.0,370.3 L387.5,372.0 L388.0,373.8 L388.5,375.7 L389.0,377.6 L389.5,379.3 L390.0,381.2 L390.5,383.7 L391.0,387.1 L391.5,392.8 L392.0,400.3 L392.5,408.8 L393.0,417.2 L393.5,425.9 L394.0,435.4 L394.5,445.1 L395.0,454.3 L395.5,462.5 L396.0,470.1 L396.5,477.3 L397.0,484.3 L397.5,491.0 L398.0,497.6 L398.5,504.3 L399.0,511.7 L399.5,518.9 L400.0,524.7 L400.5,528.1 L401.0,530.2 L401.5,531.8 L402.0,533.0 L402.5,533.9 L403.0,534.5 L403.5,534.9 L404.0,535.3 L404.5,535.6 L405.0,536.0 L405.5,536.3 L406.0,536.8 L406.5,537.6 L407.0,538.5 L407.5,539.6 L408.0,540.6 L408.5,541.5 L409.0,542.1 L409.5,542.3 L410.0,542.1 L410.5,541.6 L411.0,540.8 L411.5,540.0 L412.0,539.1 L412.5,538.3 L413.0,537.6 L413.5,537.1 L414.0,536.6 L414.5,536.1 L415.0,535.5 L415.5,534.8 L416.0,534.0 L416.5,533.1 L417.0,532.0 L417.5,530.7 L418.0,529.0 L418.5,526.9 L419.0,522.2 L419.5,513.5 L420.0,504.0 L420.5,495.7 L421.0,487.5 L421.5,479.2 L422.0,470.6 L422.5,461.9 L423.0,452.6 L423.5,442.7 L424.0,432.6 L424.5,423.1 L425.0,414.5 L425.5,405.9 L426.0,397.7 L426.5,390.7 L427.0,385.8 L427.5,382.8 L428.0,380.6 L428.5,378.7 L429.0,377.0 L429.5,375.1 L430.0,373.1 L430.5,371.3 L431.0,369.4 L431.5,367.3 L432.0,364.6 L432.5,360.9 L433.0,356.0 L433.5,350.2 L434.0,343.8 L434.5,337.1 L435.0,330.5 L435.5,323.2 L436.0,315.3 L436.5,307.1 L437.0,298.9 L437.5,291.0 L438.0,283.2 L438.5,275.3 L439.0,267.5 L439.5,259.9 L440.0,252.8 L440.5,246.1 L441.0,239.5 L441.5,233.1 L442.0,227.6 L442.5,223.3 L443.0,220.1 L443.5,217.3 L444.0,215.1 L444.5,213.8 L445.0,212.9 L445.5,212.2 L446.0,211.7 L446.5,211.1 L447.0,210.5 L447.5,210.0 L448.0,209.4 L448.5,208.9 L449.0,208.2 L449.5,207.2 L450.0,205.8 L450.5,204.6 L451.0,204.3 L451.5,204.8 L452.0,205.8 L452.5,206.9 L453.0,207.8 L453.5,208.4 L454.0,208.9 L454.5,209.4 L455.0,210.0 L455.5,210.7 L456.0,211.6 L456.5,212.5 L457.0,213.4 L457.5,214.4 L458.0,215.3 L458.5,216.1 L459.0,216.9 L459.5,217.6 L460.0,218.4 L460.5,219.4 L461.0,220.7 L461.5,223.3 L462.0,227.3 L462.5,231.8 L463.0,236.6 L463.5,242.3 L464.0,248.8 L464.5,256.8 L465.0,266.3 L465.5,276.7 L466.0,287.1 L466.5,297.4 L467.0,308.4 L467.5,319.4 L468.0,329.6 L468.5,338.9 L469.0,348.4 L469.5,356.8 L470.0,363.1 L470.5,366.5 L471.0,368.9 L471.5,370.8 L472.0,372.5 L472.5,374.3 L473.0,376.3 L473.5,378.0 L474.0,379.8 L474.5,381.9 L475.0,384.5 L475.5,388.4 L476.0,394.7 L476.5,402.6 L477.0,411.2 L477.5,419.5 L478.0,428.5 L478.5,438.1 L479.0,447.8 L479.5,456.7 L480.0,464.7 L480.5,472.2 L481.0,479.3 L481.5,486.2 L482.0,492.9 L482.5,499.5 L483.0,506.3 L483.5,513.8 L484.0,520.7 L484.5,526.0 L485.0,528.7 L485.5,530.7 L486.0,532.2 L486.5,533.3 L487.0,534.1 L487.5,534.6 L488.0,535.0 L488.5,535.4 L489.0,535.7 L489.5,536.1 L490.0,536.5 L490.5,537.0 L491.0,537.8 L491.5,538.8 L492.0,539.9 L492.5,540.9 L493.0,541.7 L493.5,542.2 L494.0,542.3 L494.5,542.0 L495.0,541.4 L495.5,540.6 L496.0,539.8 L496.5,538.9 L497.0,538.1 L497.5,537.4 L498.0,536.9 L498.5,536.4 L499.0,535.9 L499.5,535.3 L500.0,534.5 L500.5,533.8 L501.0,532.8 L501.5,531.7 L502.0,530.3 L502.5,528.5 L503.0,526.2 L503.5,520.1 L504.0,510.8 L504.5,501.6 L505.0,493.4 L505.5,485.2 L506.0,476.8 L506.5,468.2 L507.0,459.4 L507.5,449.9 L508.0,439.9 L508.5,429.9 L509.0,420.6 L509.5,412.1 L510.0,403.5 L510.5,395.5 L511.0,389.0 L511.5,384.8 L512.0,382.1 L512.5,380.0 L513.0,378.2 L513.5,376.5 L514.0,374.5 L514.5,372.6 L515.0,370.8 L515.5,368.9 L516.0,366.6 L516.5,363.7 L517.0,359.7 L517.5,354.5 L518.0,348.5 L518.5,341.9 L519.0,335.3 L519.5,328.5 L520.0,321.0 L520.5,313.0 L521.0,304.8 L521.5,296.7 L522.0,288.8 L522.5,281.0 L523.0,273.1 L523.5,265.4 L524.0,257.9 L524.5,250.8 L525.0,244.3 L525.5,237.6 L526.0,231.5 L526.5,226.2 L527.0,222.4 L527.5,219.2 L528.0,216.6 L528.5,214.6 L529.0,213.5 L529.5,212.7 L530.0,212.1 L530.5,211.5 L531.0,210.9 L531.5,210.4 L532.0,209.8 L532.5,209.3 L533.0,208.7 L533.5,208.0 L534.0,206.8 L534.5,205.4 L535.0,204.4 L535.5,204.3 L536.0,205.1 L536.5,206.1 L537.0,207.2 L537.5,207.9 L538.0,208.5 L538.5,209.0 L539.0,209.6 L539.5,210.2 L540.0,211.0 L540.5,211.8 L541.0,212.7 L541.5,213.7 L542.0,214.6 L542.5,215.5 L543.0,216.4 L543.5,217.1 L544.0,217.8 L544.5,218.6 L545.0,219.7 L545.5,221.3 L546.0,224.4 L546.5,228.6 L547.0,233.1 L547.5,238.1 L548.0,244.0 L548.5,250.9 L549.0,259.4 L549.5,269.2 L550.0,279.6 L550.5,290.0 L551.0,300.5 L551.5,311.5 L552.0,322.3 L552.5,332.2 L553.0,341.6 L553.5,350.9 L554.0,358.9 L554.5,364.2 L555.0,367.2 L555.5,369.5 L556.0,371.3 L556.5,373.0 L557.0,374.8 L557.5,376.8 L558.0,378.5 L558.5,380.3 L559.0,382.5 L559.5,385.4 L560.0,390.0 L560.5,396.8 L561.0,405.0 L561.5,413.5 L562.0,421.9 L562.5,431.1 L563.0,440.8 L563.5,450.4 L564.0,459.1 L564.5,466.8 L565.0,474.2 L565.5,481.3 L566.0,488.1 L566.5,494.7 L567.0,501.3 L567.5,508.4 L568.0,515.9 L568.5,522.4 L569.0,527.0 L569.5,529.3 L570.0,531.1 L570.5,532.5 L571.0,533.6 L571.5,534.2 L572.0,534.8 L572.5,535.2 L573.0,535.5 L573.5,535.8 L574.0,536.2 L574.5,536.6 L575.0,537.2 L575.5,538.1 L576.0,539.1 L576.5,540.1 L577.0,541.1 L577.5,541.9 L578.0,542.2 L578.5,542.2 L579.0,541.8 L579.5,541.2 L580.0,540.4 L580.5,539.5 L581.0,538.6 L581.5,537.9 L582.0,537.3 L582.5,536.8 L583.0,536.3 L583.5,535.8 L584.0,535.1 L584.5,534.3 L585.0,533.5 L585.5,532.5 L586.0,531.3 L586.5,529.8 L587.0,527.9 L587.5,525.0 L588.0,517.7 L588.5,508.1 L589.0,499.3 L589.5,491.1 L590.0,482.8 L590.5,474.4 L591.0,465.8 L591.5,456.8 L592.0,447.1 L592.5,437.0 L593.0,427.2 L593.5,418.2 L594.0,409.7 L594.5,401.2 L595.0,393.5 L595.5,387.6 L596.0,384.0 L596.5,381.5 L597.0,379.5 L597.5,377.8 L598.0,376.0 L598.5,374.0 L599.0,372.1 L599.5,370.3 L600.0,368.3 L600.5,365.9 L601.0,362.7 L601.5,358.3 L602.0,352.8 L602.5,346.7 L603.0,340.1 L603.5,333.4 L604.0,326.5 L604.5,318.8 L605.0,310.7 L605.5,302.5 L606.0,294.4 L606.5,286.7 L607.0,278.8 L607.5,270.9 L608.0,263.2 L608.5,255.8 L609.0,249.0 L609.5,242.4 L610.0,235.9 L610.5,229.9 L611.0,225.0 L611.5,221.4 L612.0,218.4 L612.5,216.0 L613.0,214.2 L613.5,213.2 L614.0,212.5 L614.5,211.9 L615.0,211.4 L615.5,210.8 L616.0,210.2 L616.5,209.7 L617.0,209.1 L617.5,208.5 L618.0,207.7 L618.5,206.4 L619.0,205.1 L619.5,204.3 L620.0,204.5 L620.5,205.3 L621.0,206.4 L621.5,207.4 L622.0,208.1 L622.5,208.7 L623.0,209.2 L623.5,209.7 L624.0,210.4 L624.5,211.2 L625.0,212.1 L625.5,213.0 L626.0,213.9 L626.5,214.9 L627.0,215.8 L627.5,216.6 L628.0,217.3 L628.5,218.0 L629.0,218.9 L629.5,220.1 L630.0,222.0 L630.5,225.5 L631.0,229.8 L631.5,234.4 L632.0,239.7 L632.5,245.8 L633.0,253.1 L633.5,262.0 L634.0,272.1 L634.5,282.5 L635.0,292.8 L635.5,303.5 L636.0,314.6 L636.5,325.2 L637.0,334.8 L637.5,344.3 L638.0,353.3 L638.5,360.7 L639.0,365.1 L639.5,367.9 L640.0,370.0 L640.5,371.7 L641.0,373.5 L641.5,375.4 L642.0,377.3 L642.5,379.0 L643.0,380.9 L643.5,383.2 L644.0,386.4 L644.5,391.7 L645.0,399.0 L645.5,407.4 L646.0,415.9 L646.5,424.4 L647.0,433.8 L647.5,443.6 L648.0,452.9 L648.5,461.3 L649.0,468.9 L649.5,476.2 L650.0,483.2 L650.5,489.9 L651.0,496.6 L651.5,503.2 L652.0,510.5 L652.5,517.8 L653.0,523.9 L653.5,527.7 L654.0,529.9 L654.5,531.6 L655.0,532.9 L655.5,533.8 L656.0,534.4 L656.5,534.9 L657.0,535.3 L657.5,535.6 L658.0,535.9 L658.5,536.3 L659.0,536.7 L659.5,537.4 L660.0,538.3 L660.5,539.4 L661.0,540.4 L661.5,541.3 L662.0,542.0 L662.5,542.3 L663.0,542.1 L663.5,541.7 L664.0,541.0 L664.5,540.1 L665.0,539.3 L665.5,538.4 L666.0,537.7 L666.5,537.1 L667.0,536.7 L667.5,536.2 L668.0,535.6 L668.5,534.9 L669.0,534.1 L669.5,533.3 L670.0,532.2 L670.5,531.0" stroke="#3c9fdc"/>
<path d="M73.0,320.3 L73.5,330.4 L74.0,339.7 L74.5,349.1 L75.0,357.4 L75.5,363.4 L76.0,366.6 L76.5,369.0 L77.0,370.9 L77.5,372.6 L78.0,374.4 L78.5,376.4 L79.0,378.1 L79.5,379.9 L80.0,381.9 L80.5,384.6 L81.0,388.6 L81.5,394.9 L82.0,402.8 L82.5,411.3 L83.0,419.6 L83.5,428.6 L84.0,438.2 L84.5,447.8 L85.0,456.8 L85.5,464.7 L86.0,472.2 L86.5,479.3 L87.0,486.1 L87.5,492.8 L88.0,499.3 L88.5,506.2 L89.0,513.6 L89.5,520.6 L90.0,525.8 L90.5,528.6 L91.0,530.6 L91.5,532.1 L92.0,533.3 L92.5,534.0 L93.0,534.6 L93.5,535.0 L94.0,535.4 L94.5,535.7 L95.0,536.0 L95.5,536.4 L96.0,537.0 L96.5,537.7 L97.0,538.7 L97.5,539.8 L98.0,540.8 L98.5,541.6 L99.0,542.1 L99.5,542.3 L100.0,542.0 L100.5,541.5 L101.0,540.7 L101.5,539.8 L102.0,539.0 L102.5,538.2 L103.0,537.5 L103.5,537.0 L104.0,536.5 L104.5,536.0 L105.0,535.4 L105.5,534.7 L106.0,533.9 L106.5,533.0 L107.0,531.9 L107.5,530.5 L108.0,528.8 L108.5,526.7 L109.0,521.3 L109.5,512.4 L110.0,503.0 L110.5,494.8 L111.0,486.6 L111.5,478.3 L112.0,469.8 L112.5,461.0 L113.0,451.8 L113.5,441.8 L114.0,431.8 L114.5,422.3 L115.0,413.8 L115.5,405.3 L116.0,397.1 L116.5,390.3 L117.0,385.5 L117.5,382.7 L118.0,380.5 L118.5,378.6 L119.0,376.9 L119.5,375.0 L120.0,373.0 L120.5,371.2 L121.0,369.4 L121.5,367.2 L122.0,364.5 L122.5,360.8 L123.0,355.9 L123.5,350.1 L124.0,343.7 L124.5,337.1 L125.0,330.4 L125.5,323.1 L126.0,315.3 L126.5,307.1 L127.0,299.0 L127.5,291.1 L128.0,283.3 L128.5,275.4 L129.0,267.6 L129.5,260.1 L130.0,252.9 L130.5,246.3 L131.0,239.7 L131.5,233.3 L132.0,227.8 L132.5,223.5 L133.0,220.2 L133.5,217.4 L134.0,215.2 L134.5,213.8 L135.0,212.9 L135.5,212.3 L136.0,211.7 L136.5,211.2 L137.0,210.6 L137.5,210.0 L138.0,209.5 L138.5,208.9 L139.0,208.3 L139.5,207.3 L140.0,205.9 L140.5,204.7 L141.0,204.2 L141.5,204.7 L142.0,205.7 L142.5,206.8 L143.0,207.7 L143.5,208.3 L144.0,208.8 L144.5,209.3 L145.0,209.9 L145.5,210.6 L146.0,211.5 L146.5,212.3 L147.0,213.3 L147.5,214.2 L148.0,215.1 L148.5,216.0 L149.0,216.8 L149.5,217.5 L150.0,218.2 L150.5,219.2 L151.0,220.5 L151.5,222.8 L152.0,226.6 L152.5,231.0 L153.0,235.7 L153.5,241.2 L154.0,247.5 L154.5,255.2 L155.0,264.4 L155.5,274.6 L156.0,285.0 L156.5,295.2 L157.0,306.1 L157.5,317.1 L158.0,327.5 L158.5,336.8 L159.0,346.3 L159.5,355.1 L160.0,361.9 L160.5,365.8 L161.0,368.4 L161.5,370.4 L162.0,372.1 L162.5,373.8 L163.0,375.8 L163.5,377.6 L164.0,379.3 L164.5,381.3 L165.0,383.7 L165.5,387.1 L166.0,392.8 L166.5,400.4 L167.0,408.8 L167.5,417.1 L168.0,425.8 L168.5,435.3 L169.0,445.0 L169.5,454.2 L170.0,462.4 L170.5,470.0 L171.0,477.2 L171.5,484.1 L172.0,490.8 L172.5,497.4 L173.0,504.0 L173.5,511.4 L174.0,518.6 L174.5,524.5 L175.0,528.0 L175.5,530.1 L176.0,531.7 L176.5,533.0 L177.0,533.8 L177.5,534.4 L178.0,534.9 L178.5,535.3 L179.0,535.6 L179.5,535.9 L180.0,536.3 L180.5,536.8 L181.0,537.5 L181.5,538.4 L182.0,539.5 L182.5,540.5 L183.0,541.4 L183.5,542.0 L184.0,542.3 L184.5,542.1 L185.0,541.6 L185.5,540.9 L186.0,540.1 L186.5,539.2 L187.0,538.4 L187.5,537.7 L188.0,537.1 L188.5,536.7 L189.0,536.2 L189.5,535.6 L190.0,534.9 L190.5,534.1 L191.0,533.3 L191.5,532.2 L192.0,531.0 L192.5,529.4 L193.0,527.4 L193.5,523.4 L194.0,515.3 L194.5,505.7 L195.0,497.3 L195.5,489.1 L196.0,480.8 L196.5,472.4 L197.0,463.7 L197.5,454.6 L198.0,444.8 L198.5,434.8 L199.0,425.1 L199.5,416.3 L200.0,407.8 L200.5,399.5 L201.0,392.1 L201.5,386.7 L202.0,383.4 L202.5,381.1 L203.0,379.2 L203.5,377.4 L204.0,375.6 L204.5,373.6 L205.0,371.8 L205.5,369.9 L206.0,367.9 L206.5,365.4 L207.0,362.1 L207.5,357.5 L208.0,351.9 L208.5,345.6 L209.0,339.1 L209.5,332.4 L210.0,325.4 L210.5,317.7 L211.0,309.6 L211.5,301.4 L212.0,293.4 L212.5,285.6 L213.0,277.8 L213.5,270.0 L214.0,262.3 L214.5,255.0 L215.0,248.3 L215.5,241.7 L216.0,235.2 L216.5,229.3 L217.0,224.6 L217.5,221.1 L218.0,218.2 L218.5,215.8 L219.0,214.1 L219.5,213.2 L220.0,212.5 L220.5,211.9 L221.0,211.3 L221.5,210.7 L222.0,210.2 L222.5,209.6 L223.0,209.1 L223.5,208.5 L224.0,207.7 L224.5,206.4 L225.0,205.0 L225.5,204.3 L226.0,204.5 L226.5,205.4 L227.0,206.5 L227.5,207.5 L228.0,208.1 L228.5,208.7 L229.0,209.2 L229.5,209.7 L230.0,210.4 L230.5,211.2 L231.0,212.1 L231.5,213.0 L232.0,213.9 L232.5,214.9 L233.0,215.8 L233.5,216.6 L234.0,217.2 L234.5,218.0 L235.0,218.9 L235.5,220.1 L236.0,221.9 L236.5,225.3 L237.0,229.7 L237.5,234.2 L238.0,239.4 L238.5,245.5 L239.0,252.7 L239.5,261.5 L240.0,271.5 L240.5,281.9 L241.0,292.1 L241.5,302.8 L242.0,313.8 L242.5,324.5 L243.0,334.1 L243.5,343.5 L244.0,352.6 L244.5,360.1 L245.0,364.9 L245.5,367.7 L246.0,369.8 L246.5,371.6 L247.0,373.3 L247.5,375.2 L248.0,377.1 L248.5,378.8 L249.0,380.6 L249.5,382.9 L250.0,385.9 L250.5,390.9 L251.0,398.0 L251.5,406.2 L252.0,414.7 L252.5,423.1 L253.0,432.4 L253.5,442.1 L254.0,451.5 L254.5,460.0 L255.0,467.7 L255.5,475.0 L256.0,482.0 L256.5,488.8 L257.0,495.4 L257.5,502.0 L258.0,509.2 L258.5,516.5 L259.0,522.9 L259.5,527.2 L260.0,529.5 L260.5,531.3 L261.0,532.6 L261.5,533.6 L262.0,534.3 L262.5,534.8 L263.0,535.2 L263.5,535.5 L264.0,535.8 L264.5,536.2 L265.0,536.6 L265.5,537.2 L266.0,538.1 L266.5,539.1 L267.0,540.2 L267.5,541.1 L268.0,541.9 L268.5,542.3 L269.0,542.2 L269.5,541.8 L270.0,541.2 L270.5,540.4 L271.0,539.5 L271.5,538.6 L272.0,537.9 L272.5,537.3 L273.0,536.8 L273.5,536.3 L274.0,535.8 L274.5,535.1 L275.0,534.3 L275.5,533.5 L276.0,532.6 L276.5,531.4 L277.0,529.9 L277.5,528.0 L278.0,525.2 L278.5,518.0 L279.0,508.6 L279.5,499.7 L280.0,491.5 L280.5,483.3 L281.0,474.9 L281.5,466.3 L282.0,457.4 L282.5,447.8 L283.0,437.8 L283.5,427.9 L284.0,418.8 L284.5,410.4 L285.0,401.9 L285.5,394.2 L286.0,388.1 L286.5,384.3 L287.0,381.7 L287.5,379.7 L288.0,377.9 L288.5,376.2 L289.0,374.2 L289.5,372.3 L290.0,370.5 L290.5,368.5 L291.0,366.2 L291.5,363.2 L292.0,359.0 L292.5,353.7 L293.0,347.6 L293.5,341.0 L294.0,334.4 L294.5,327.6 L295.0,320.1 L295.5,312.0 L296.0,303.8 L296.5,295.7 L297.0,288.0 L297.5,280.2 L298.0,272.3 L298.5,264.6 L299.0,257.2 L299.5,250.2 L300.0,243.7 L300.5,237.1 L301.0,231.0 L301.5,225.9 L302.0,222.1 L302.5,219.0 L303.0,216.4 L303.5,214.5 L304.0,213.4 L304.5,212.6 L305.0,212.0 L305.5,211.5 L306.0,210.9 L306.5,210.3 L307.0,209.8 L307.5,209.3 L308.0,208.7 L308.5,207.9 L309.0,206.8 L309.5,205.4 L310.0,204.4 L310.5,204.3 L311.0,205.1 L311.5,206.1 L312.0,207.2 L312.5,207.9 L313.0,208.5 L313.5,209.0 L314.0,209.6 L314.5,210.2 L315.0,211.0 L315.5,211.8 L316.0,212.7 L316.5,213.6 L317.0,214.6 L317.5,215.5 L318.0,216.3 L318.5,217.0 L319.0,217.7 L319.5,218.6 L320.0,219.7 L320.5,221.2 L321.0,224.2 L321.5,228.3 L322.0,232.8 L322.5,237.8 L323.0,243.6 L323.5,250.3 L324.0,258.7 L324.5,268.4 L325.0,278.7 L325.5,289.1 L326.0,299.5 L326.5,310.5 L327.0,321.3 L327.5,331.3 L328.0,340.6 L328.5,350.0 L329.0,358.1 L329.5,363.8 L330.0,366.9 L330.5,369.2 L331.0,371.1 L331.5,372.7 L332.0,374.6 L332.5,376.5 L333.0,378.3 L333.5,380.1 L334.0,382.2 L334.5,384.9 L335.0,389.1 L335.5,395.7 L336.0,403.7 L336.5,412.2 L337.0,420.5 L337.5,429.5 L338.0,439.2 L338.5,448.8 L339.0,457.6 L339.5,465.5 L340.0,472.9 L340.5,480.0 L341.0,486.8 L341.5,493.4 L342.0,500.0 L342.5,506.9 L343.0,514.4 L343.5,521.2 L344.0,526.2 L344.5,528.9 L345.0,530.8 L345.5,532.3 L346.0,533.4 L346.5,534.1 L347.0,534.6 L347.5,535.1 L348.0,535.4 L348.5,535.7 L349.0,536.1 L349.5,536.5 L350.0,537.0 L350.5,537.8 L351.0,538.8 L351.5,539.9 L352.0,540.9 L352.5,541.7 L353.0,542.2 L353.5,542.3 L354.0,542.0 L354.5,541.4 L355.0,540.6 L355.5,539.8 L356.0,538.9 L356.5,538.1 L357.0,537.5 L357.5,536.9 L358.0,536.5 L358.5,535.9 L359.0,535.3 L359.5,534.6 L360.0,533.8 L360.5,532.9 L361.0,531.8 L361.5,530.4 L362.0,528.6 L362.5,526.4 L363.0,520.6 L363.5,511.5 L364.0,502.1 L364.5,494.0 L365.0,485.8 L365.5,477.5 L366.0,468.9 L366.5,460.1 L367.0,450.8 L367.5,440.8 L368.0,430.8 L368.5,421.4 L369.0,413.0 L369.5,404.4 L370.0,396.4 L370.5,389.7 L371.0,385.2 L371.5,382.4 L372.0,380.3 L372.5,378.5 L373.0,376.7 L373.5,374.8 L374.0,372.9 L374.5,371.1 L375.0,369.2 L375.5,367.0 L376.0,364.2 L376.5,360.4 L377.0,355.3 L377.5,349.5 L378.0,343.0 L378.5,336.4 L379.0,329.7 L379.5,322.4 L380.0,314.5 L380.5,306.3 L381.0,298.2 L381.5,290.3 L382.0,282.5 L382.5,274.7 L383.0,266.9 L383.5,259.3 L384.0,252.2 L384.5,245.6 L385.0,239.0 L385.5,232.7 L386.0,227.3 L386.5,223.1 L387.0,219.9 L387.5,217.2 L388.0,215.0 L388.5,213.7 L389.0,212.9 L389.5,212.2 L390.0,211.7 L390.5,211.1 L391.0,210.5 L391.5,210.0 L392.0,209.4 L392.5,208.9 L393.0,208.2 L393.5,207.2 L394.0,205.8 L394.5,204.6 L395.0,204.3 L395.5,204.8 L396.0,205.8 L396.5,206.9 L397.0,207.7 L397.5,208.3 L398.0,208.9 L398.5,209.4 L399.0,210.0 L399.5,210.7 L400.0,211.5 L400.5,212.4 L401.0,213.4 L401.5,214.3 L402.0,215.2 L402.5,216.1 L403.0,216.8 L403.5,217.5 L404.0,218.3 L404.5,219.3 L405.0,220.6 L405.5,223.1 L406.0,227.0 L406.5,231.5 L407.0,236.2 L407.5,241.7 L408.0,248.2 L408.5,256.0 L409.0,265.4 L409.5,275.6 L410.0,286.0 L410.5,296.3 L411.0,307.2 L411.5,318.1 L412.0,328.5 L412.5,337.8 L413.0,347.2 L413.5,355.9 L414.0,362.4 L414.5,366.1 L415.0,368.6 L415.5,370.5 L416.0,372.2 L416.5,374.0 L417.0,376.0 L417.5,377.8 L418.0,379.5 L418.5,381.5 L419.0,384.0 L419.5,387.6 L420.0,393.5 L420.5,401.2 L421.0,409.6 L421.5,418.0 L422.0,426.7 L422.5,436.3 L423.0,445.9 L423.5,455.1 L424.0,463.2 L424.5,470.7 L425.0,477.9 L425.5,484.8 L426.0,491.4 L426.5,498.0 L427.0,504.7 L427.5,512.1 L428.0,519.3 L428.5,525.0 L429.0,528.2 L429.5,530.2 L430.0,531.9 L430.5,533.1 L431.0,533.9 L431.5,534.5 L432.0,534.9 L432.5,535.3 L433.0,535.6 L433.5,536.0 L434.0,536.4 L434.5,536.8 L435.0,537.6 L435.5,538.5 L436.0,539.6 L436.5,540.6 L437.0,541.5 L437.5,542.1 L438.0,542.3 L438.5,542.1 L439.0,541.6 L439.5,540.9 L440.0,540.0 L440.5,539.1 L441.0,538.3 L441.5,537.6 L442.0,537.1 L442.5,536.6 L443.0,536.1 L443.5,535.5 L444.0,534.8 L444.5,534.0 L445.0,533.2 L445.5,532.1 L446.0,530.8 L446.5,529.2 L447.0,527.1 L447.5,522.8 L448.0,514.4 L448.5,504.8 L449.0,496.4 L449.5,488.3 L450.0,480.0 L450.5,471.5 L451.0,462.8 L451.5,453.7 L452.0,443.8 L452.5,433.8 L453.0,424.2 L453.5,415.5 L454.0,407.0 L454.5,398.7 L455.0,391.5 L455.5,386.3 L456.0,383.2 L456.5,380.9 L457.0,379.0 L457.5,377.3 L458.0,375.4 L458.5,373.4 L459.0,371.6 L459.5,369.8 L460.0,367.7 L460.5,365.1 L461.0,361.7 L461.5,357.0 L462.0,351.3 L462.5,345.0 L463.0,338.4 L463.5,331.8 L464.0,324.6 L464.5,316.9 L465.0,308.8 L465.5,300.6 L466.0,292.6 L466.5,284.9 L467.0,277.0 L467.5,269.2 L468.0,261.6 L468.5,254.3 L469.0,247.6 L469.5,241.0 L470.0,234.6 L470.5,228.8 L471.0,224.2 L471.5,220.8 L472.0,217.9 L472.5,215.6 L473.0,214.0 L473.5,213.1 L474.0,212.4 L474.5,211.8 L475.0,211.3 L475.5,210.7 L476.0,210.1 L476.5,209.6 L477.0,209.0 L477.5,208.4 L478.0,207.5 L478.5,206.2 L479.0,204.9 L479.5,204.2 L480.0,204.6 L480.5,205.5 L481.0,206.6 L481.5,207.5 L482.0,208.2 L482.5,208.7 L483.0,209.2 L483.5,209.8 L484.0,210.5 L484.5,211.3 L485.0,212.2 L485.5,213.1 L486.0,214.0 L486.5,215.0 L487.0,215.9 L487.5,216.6 L488.0,217.3 L488.5,218.1 L489.0,219.0 L489.5,220.2 L490.0,222.2 L490.5,225.7 L491.0,230.1 L491.5,234.7 L492.0,240.0 L492.5,246.1 L493.0,253.5 L493.5,262.5 L494.0,272.5 L494.5,282.9 L495.0,293.1 L495.5,303.9 L496.0,314.9 L496.5,325.5 L497.0,335.0 L497.5,344.4 L498.0,353.4 L498.5,360.7 L499.0,365.2 L499.5,367.9 L500.0,370.0 L500.5,371.7 L501.0,373.4 L501.5,375.4 L502.0,377.3 L502.5,379.0 L503.0,380.9 L503.5,383.2 L504.0,386.3 L504.5,391.5 L505.0,398.8 L505.5,407.1 L506.0,415.5 L506.5,424.0 L507.0,433.4 L507.5,443.1 L508.0,452.4 L508.5,460.8 L509.0,468.5 L509.5,475.8 L510.0,482.7 L510.5,489.5 L511.0,496.1 L511.5,502.7 L512.0,509.9 L512.5,517.2 L513.0,523.5 L513.5,527.5 L514.0,529.7 L514.5,531.4 L515.0,532.7 L515.5,533.7 L516.0,534.3 L516.5,534.8 L517.0,535.2 L517.5,535.5 L518.0,535.9 L518.5,536.2 L519.0,536.7 L519.5,537.3 L520.0,538.2 L520.5,539.2 L521.0,540.3 L521.5,541.2 L522.0,541.9 L522.5,542.3 L523.0,542.2 L523.5,541.8 L524.0,541.1 L524.5,540.3 L525.0,539.4 L525.5,538.6 L526.0,537.8 L526.5,537.2 L527.0,536.7 L527.5,536.3 L528.0,535.7 L528.5,535.0 L529.0,534.3 L529.5,533.4 L530.0,532.5 L530.5,531.2 L531.0,529.7 L531.5,527.8 L532.0,524.6 L532.5,517.1 L533.0,507.6 L533.5,498.9 L534.0,490.7 L534.5,482.5 L535.0,474.1 L535.5,465.4 L536.0,456.5 L536.5,446.8 L537.0,436.8 L537.5,427.0 L538.0,418.0 L538.5,409.6 L539.0,401.1 L539.5,393.5 L540.0,387.6 L540.5,384.0 L541.0,381.5 L541.5,379.5 L542.0,377.8 L542.5,376.0 L543.0,374.0 L543.5,372.1 L544.0,370.3 L544.5,368.3 L545.0,365.9 L545.5,362.8 L546.0,358.5 L546.5,353.1 L547.0,346.9 L547.5,340.4 L548.0,333.7 L548.5,326.9 L549.0,319.3 L549.5,311.2 L550.0,303.0 L550.5,295.0 L551.0,287.2 L551.5,279.4 L552.0,271.5 L552.5,263.8 L553.0,256.4 L553.5,249.6 L554.0,243.0 L554.5,236.4 L555.0,230.4 L555.5,225.4 L556.0,221.8 L556.5,218.7 L557.0,216.2 L557.5,214.4 L558.0,213.3 L558.5,212.6 L559.0,212.0 L559.5,211.4 L560.0,210.9 L560.5,210.3 L561.0,209.8 L561.5,209.2 L562.0,208.6 L562.5,207.9 L563.0,206.6 L563.5,205.3 L564.0,204.3 L564.5,204.4 L565.0,205.2 L565.5,206.3 L566.0,207.3 L566.5,208.0 L567.0,208.6 L567.5,209.1 L568.0,209.6 L568.5,210.3 L569.0,211.0 L569.5,211.9 L570.0,212.8 L570.5,213.7 L571.0,214.7 L571.5,215.6 L572.0,216.4 L572.5,217.1 L573.0,217.8 L573.5,218.7 L574.0,219.8 L574.5,221.4 L575.0,224.5 L575.5,228.8 L576.0,233.3 L576.5,238.3 L577.0,244.2 L577.5,251.1 L578.0,259.6 L578.5,269.4 L579.0,279.8 L579.5,290.1 L580.0,300.6 L580.5,311.6 L581.0,322.4 L581.5,332.2 L582.0,341.6 L582.5,350.9 L583.0,358.8 L583.5,364.2 L584.0,367.2 L584.5,369.4 L585.0,371.2 L585.5,372.9 L586.0,374.8 L586.5,376.7 L587.0,378.5 L587.5,380.3 L588.0,382.4 L588.5,385.2 L589.0,389.7 L589.5,396.4 L590.0,404.5 L590.5,413.0 L591.0,421.3 L591.5,430.5 L592.0,440.2 L592.5,449.7 L593.0,458.4 L593.5,466.2 L594.0,473.6 L594.5,480.7 L595.0,487.5 L595.5,494.1 L596.0,500.7 L596.5,507.7 L597.0,515.1 L597.5,521.8 L598.0,526.6 L598.5,529.1 L599.0,530.9 L599.5,532.4 L600.0,533.4 L600.5,534.2 L601.0,534.7 L601.5,535.1 L602.0,535.4 L602.5,535.8 L603.0,536.1 L603.5,536.5 L604.0,537.1 L604.5,537.9 L605.0,538.9 L605.5,540.0 L606.0,541.0 L606.5,541.7 L607.0,542.2 L607.5,542.2 L608.0,541.9 L608.5,541.3 L609.0,540.5 L609.5,539.7 L610.0,538.8 L610.5,538.0 L611.0,537.4 L611.5,536.9 L612.0,536.4 L612.5,535.9 L613.0,535.2 L613.5,534.5 L614.0,533.7 L614.5,532.8 L615.0,531.6 L615.5,530.2 L616.0,528.4 L616.5,526.0 L617.0,519.7 L617.5,510.5 L618.0,501.3 L618.5,493.2 L619.0,485.0 L619.5,476.6 L620.0,468.1 L620.5,459.2 L621.0,449.8 L621.5,439.8 L622.0,429.8 L622.5,420.6 L623.0,412.1 L623.5,403.6 L624.0,395.6 L624.5,389.1 L625.0,384.9 L625.5,382.2 L626.0,380.1 L626.5,378.3 L627.0,376.5 L627.5,374.6 L628.0,372.7 L628.5,370.9 L629.0,369.0 L629.5,366.7 L630.0,363.9 L630.5,359.9 L631.0,354.8 L631.5,348.8 L632.0,342.4 L632.5,335.7 L633.0,329.0 L633.5,321.6 L634.0,313.7 L634.5,305.5 L635.0,297.3 L635.5,289.5 L636.0,281.7 L636.5,273.9 L637.0,266.1 L637.5,258.6 L638.0,251.6 L638.5,245.0 L639.0,238.4 L639.5,232.1 L640.0,226.8 L640.5,222.8 L641.0,219.6 L641.5,216.9 L642.0,214.9 L642.5,213.6 L643.0,212.8 L643.5,212.2 L644.0,211.6 L644.5,211.0 L645.0,210.4 L645.5,209.9 L646.0,209.4 L646.5,208.8 L647.0,208.1 L647.5,207.0 L648.0,205.7 L648.5,204.5 L649.0,204.3 L649.5,204.9 L650.0,205.9 L650.5,207.0 L651.0,207.8 L651.5,208.4 L652.0,208.9 L652.5,209.5 L653.0,210.1 L653.5,210.8 L654.0,211.6 L654.5,212.5 L655.0,213.5 L655.5,214.4 L656.0,215.3 L656.5,216.2 L657.0,216.9 L657.5,217.6 L658.0,218.4 L658.5,219.4 L659.0,220.8 L659.5,223.4 L660.0,227.4 L660.5,231.9 L661.0,236.7 L661.5,242.3 L662.0,248.9 L662.5,256.9 L663.0,266.4 L663.5,276.6 L664.0,287.1 L664.5,297.3 L665.0,308.3 L665.5,319.2 L666.0,329.4 L666.5,338.7 L667.0,348.2 L667.5,356.6 L668.0,362.9 L668.5,366.4 L669.0,368.8 L669.5,370.7 L670.0,372.4 L670.5,374.2" stroke="#e02222"/>
</g>
<g fill="none" stroke-width="2" stroke-linejoin="round" stroke-linecap="round">
<path d="M74.0,259.1 L74.5,252.0 L75.0,245.4 L75.5,238.8 L76.0,232.5 L76.5,227.0 L77.0,222.9 L77.5,219.8 L78.0,217.0 L78.5,214.9 L79.0,213.7 L79.5,212.8 L80.0,212.2 L80.5,211.6 L81.0,211.1 L81.5,210.5 L82.0,209.9 L82.5,209.4 L83.0,208.8 L83.5,208.1 L84.0,207.1 L84.5,205.7 L85.0,204.5 L85.5,204.3 L86.0,204.9 L86.5,205.9 L87.0,207.0 L87.5,207.8 L88.0,208.4 L88.5,208.9 L89.0,209.5 L89.5,210.1 L90.0,210.8 L90.5,211.6 L91.0,212.5 L91.5,213.5 L92.0,214.4 L92.5,215.3 L93.0,216.2 L93.5,216.9 L94.0,217.6 L94.5,218.4 L95.0,219.4 L95.5,220.8 L96.0,223.5 L96.5,227.5 L97.0,232.0 L97.5,236.9 L98.0,242.5 L98.5,249.1 L99.0,257.2 L99.5,266.7 L100.0,277.0 L100.5,287.4 L101.0,297.8 L101.5,308.7 L102.0,319.7 L102.5,329.9 L103.0,339.2 L103.5,348.6 L104.0,357.0 L104.5,363.2 L105.0,366.5 L105.5,368.9 L106.0,370.8 L106.5,372.5 L107.0,374.3 L107.5,376.3 L108.0,378.1 L108.5,379.8 L109.0,381.9 L109.5,384.5 L110.0,388.4 L110.5,394.8 L111.0,402.7 L111.5,411.2 L112.0,419.5 L112.5,428.4 L113.0,438.1 L113.5,447.7 L114.0,456.7 L114.5,464.6 L115.0,472.1 L115.5,479.2 L116.0,486.1 L116.5,492.8 L117.0,499.3 L117.5,506.2 L118.0,513.7 L118.5,520.6 L119.0,525.9 L119.5,528.7 L120.0,530.6 L120.5,532.1 L121.0,533.3 L121.5,534.0 L122.0,534.6 L122.5,535.0 L123.0,535.4 L123.5,535.7 L124.0,536.0 L124.5,536.5 L125.0,537.0 L125.5,537.8 L126.0,538.7 L126.5,539.8 L127.0,540.8 L127.5,541.6 L128.0,542.2 L128.5,542.3 L129.0,542.0 L129.5,541.4 L130.0,540.7 L130.5,539.8 L131.0,538.9 L131.5,538.1 L132.0,537.5 L132.5,537.0 L133.0,536.5 L133.5,536.0 L134.0,535.3 L134.5,534.6 L135.0,533.8 L135.5,532.9 L136.0,531.8 L136.5,530.4 L137.0,528.7 L137.5,526.4 L138.0,520.7 L138.5,511.6 L139.0,502.3 L139.5,494.1 L140.0,485.9 L140.5,477.5 L141.0,469.0 L141.5,460.2 L142.0,450.8 L142.5,440.8 L143.0,430.8 L143.5,421.4 L144.0,413.0 L144.5,404.4 L145.0,396.3 L145.5,389.6 L146.0,385.2 L146.5,382.4 L147.0,380.2 L147.5,378.4 L148.0,376.7 L148.5,374.8 L149.0,372.8 L149.5,371.0 L150.0,369.1 L150.5,366.9 L151.0,364.1 L151.5,360.2 L152.0,355.2 L152.5,349.2 L153.0,342.8 L153.5,336.1 L154.0,329.4 L154.5,322.1 L155.0,314.1 L155.5,305.9 L156.0,297.8 L156.5,289.9 L157.0,282.1 L157.5,274.2 L158.0,266.5 L158.5,258.9 L159.0,251.8 L159.5,245.2 L160.0,238.6 L160.5,232.4 L161.0,226.9 L161.5,222.9 L162.0,219.7 L162.5,217.0 L163.0,214.9 L163.5,213.6 L164.0,212.8 L164.5,212.2 L165.0,211.6 L165.5,211.0 L166.0,210.5 L166.5,209.9 L167.0,209.4 L167.5,208.8 L168.0,208.1 L168.5,207.1 L169.0,205.7 L169.5,204.5 L170.0,204.3 L170.5,204.9 L171.0,205.9 L171.5,207.0 L172.0,207.8 L172.5,208.4 L173.0,208.9 L173.5,209.5 L174.0,210.1 L174.5,210.8 L175.0,211.6 L175.5,212.5 L176.0,213.5 L176.5,214.4 L177.0,215.4 L177.5,216.2 L178.0,216.9 L178.5,217.6 L179.0,218.4 L179.5,219.5 L180.0,220.9 L180.5,223.6 L181.0,227.6 L181.5,232.1 L182.0,237.0 L182.5,242.6 L183.0,249.2 L183.5,257.4 L184.0,266.9 L184.5,277.2 L185.0,287.6 L185.5,298.0 L186.0,309.0 L186.5,319.9 L187.0,330.1 L187.5,339.4 L188.0,348.8 L188.5,357.2 L189.0,363.2 L189.5,366.6 L190.0,369.0 L190.5,370.8 L191.0,372.5 L191.5,374.3 L192.0,376.3 L192.5,378.1 L193.0,379.9 L193.5,381.9 L194.0,384.6 L194.5,388.5 L195.0,394.9 L195.5,402.8 L196.0,411.3 L196.5,419.6 L197.0,428.6 L197.5,438.3 L198.0,447.9 L198.5,456.8 L199.0,464.8 L199.5,472.2 L200.0,479.4 L200.5,486.2 L201.0,492.9 L201.5,499.5 L202.0,506.4 L202.5,513.8 L203.0,520.7 L203.5,525.9 L204.0,528.7 L204.5,530.7 L205.0,532.2 L205.5,533.3 L206.0,534.1 L206.5,534.6 L207.0,535.0 L207.5,535.4 L208.0,535.7 L208.5,536.1 L209.0,536.5 L209.5,537.0 L210.0,537.8 L210.5,538.8 L211.0,539.8 L211.5,540.8 L212.0,541.7 L212.5,542.2 L213.0,542.3 L213.5,542.0 L214.0,541.4 L214.5,540.6 L215.0,539.8 L215.5,538.9 L216.0,538.1 L216.5,537.5 L217.0,537.0 L217.5,536.5 L218.0,536.0 L218.5,535.3 L219.0,534.6 L219.5,533.8 L220.0,532.9 L220.5,531.8 L221.0,530.4 L221.5,528.6 L222.0,526.4 L222.5,520.6 L223.0,511.4 L223.5,502.1 L224.0,494.0 L224.5,485.7 L225.0,477.4 L225.5,468.8 L226.0,460.0 L226.5,450.6 L227.0,440.6 L227.5,430.6 L228.0,421.3 L228.5,412.8 L229.0,404.2 L229.5,396.2 L230.0,389.5 L230.5,385.1 L231.0,382.3 L231.5,380.2 L232.0,378.4 L232.5,376.7 L233.0,374.7 L233.5,372.8 L234.0,371.0 L234.5,369.1 L235.0,366.8 L235.5,364.1 L236.0,360.1 L236.5,355.1 L237.0,349.1 L237.5,342.7 L238.0,336.0 L238.5,329.3 L239.0,321.9 L239.5,314.0 L240.0,305.8 L240.5,297.6 L241.0,289.8 L241.5,282.0 L242.0,274.1 L242.5,266.3 L243.0,258.8 L243.5,251.7 L244.0,245.1 L244.5,238.5 L245.0,232.2 L245.5,226.8 L246.0,222.8 L246.5,219.6 L247.0,216.9 L247.5,214.9 L248.0,213.6 L248.5,212.8 L249.0,212.2 L249.5,211.6 L250.0,211.0 L250.5,210.4 L251.0,209.9 L251.5,209.4 L252.0,208.8 L252.5,208.1 L253.0,207.0 L253.5,205.6 L254.0,204.5 L254.5,204.3 L255.0,204.9 L255.5,205.9 L256.0,207.0 L256.5,207.8 L257.0,208.4 L257.5,208.9 L258.0,209.5 L258.5,210.1 L259.0,210.8 L259.5,211.7 L260.0,212.6 L260.5,213.5 L261.0,214.4 L261.5,215.4 L262.0,216.2 L262.5,216.9 L263.0,217.6 L263.5,218.5 L264.0,219.5 L264.5,220.9 L265.0,223.6 L265.5,227.7 L266.0,232.2 L266.5,237.1 L267.0,242.8 L267.5,249.4 L268.0,257.5 L268.5,267.1 L269.0,277.4 L269.5,287.8 L270.0,298.2 L270.5,309.2 L271.0,320.1 L271.5,330.2 L272.0,339.6 L272.5,349.0 L273.0,357.3 L273.5,363.3 L274.0,366.6 L274.5,369.0 L275.0,370.9 L275.5,372.6 L276.0,374.4 L276.5,376.4 L277.0,378.1 L277.5,379.9 L278.0,382.0 L278.5,384.6 L279.0,388.6 L279.5,395.1 L280.0,403.0 L280.5,411.5 L281.0,419.8 L281.5,428.8 L282.0,438.5 L282.5,448.1 L283.0,457.0 L283.5,464.9 L284.0,472.4 L284.5,479.5 L285.0,486.3 L285.5,493.0 L286.0,499.6 L286.5,506.5 L287.0,514.0 L287.5,520.9 L288.0,526.0 L288.5,528.7 L289.0,530.7 L289.5,532.2 L290.0,533.3 L290.5,534.1 L291.0,534.6 L291.5,535.1 L292.0,535.4 L292.5,535.7 L293.0,536.1 L293.5,536.5 L294.0,537.0 L294.5,537.8 L295.0,538.8 L295.5,539.8 L296.0,540.8 L296.5,541.7 L297.0,542.2 L297.5,542.3 L298.0,542.0 L298.5,541.4 L299.0,540.6 L299.5,539.8 L300.0,538.9 L300.5,538.1 L301.0,537.5 L301.5,536.9 L302.0,536.5 L302.5,535.9 L303.0,535.3 L303.5,534.6 L304.0,533.8 L304.5,532.9 L305.0,531.8 L305.5,530.4 L306.0,528.6 L306.5,526.3 L307.0,520.4 L307.5,511.3 L308.0,502.0 L308.5,493.8 L309.0,485.6 L309.5,477.2 L310.0,468.7 L310.5,459.8 L311.0,450.4 L311.5,440.4 L312.0,430.5 L312.5,421.1 L313.0,412.6 L313.5,404.1 L314.0,396.0 L314.5,389.4 L315.0,385.1 L315.5,382.3 L316.0,380.2 L316.5,378.4 L317.0,376.6 L317.5,374.7 L318.0,372.7 L318.5,370.9 L319.0,369.0 L319.5,366.8 L320.0,364.0 L320.5,360.0 L321.0,354.9 L321.5,349.0 L322.0,342.5 L322.5,335.9 L323.0,329.2 L323.5,321.7 L324.0,313.8 L324.5,305.6 L325.0,297.4 L325.5,289.6 L326.0,281.8 L326.5,273.9 L327.0,266.1 L327.5,258.6 L328.0,251.6 L328.5,245.0 L329.0,238.4 L329.5,232.1 L330.0,226.8 L330.5,222.7 L331.0,219.6 L331.5,216.9 L332.0,214.8 L332.5,213.6 L333.0,212.8 L333.5,212.1 L334.0,211.6 L334.5,211.0 L335.0,210.4 L335.5,209.9 L336.0,209.4 L336.5,208.8 L337.0,208.1 L337.5,207.0 L338.0,205.6 L338.5,204.5 L339.0,204.3 L339.5,204.9 L340.0,206.0 L340.5,207.1 L341.0,207.8 L341.5,208.4 L342.0,209.0 L342.5,209.5 L343.0,210.1 L343.5,210.8 L344.0,211.7 L344.5,212.6 L345.0,213.5 L345.5,214.5 L346.0,215.4 L346.5,216.2 L347.0,216.9 L347.5,217.7 L348.0,218.5 L348.5,219.5 L349.0,220.9 L349.5,223.7 L350.0,227.8 L350.5,232.3 L351.0,237.2 L351.5,242.9 L352.0,249.5 L352.5,257.7 L353.0,267.3 L353.5,277.6 L354.0,288.1 L354.5,298.4 L355.0,309.4 L355.5,320.3 L356.0,330.4 L356.5,339.7 L357.0,349.1 L357.5,357.5 L358.0,363.4 L358.5,366.7 L359.0,369.0 L359.5,370.9 L360.0,372.6 L360.5,374.4 L361.0,376.4 L361.5,378.2 L362.0,379.9 L362.5,382.0 L363.0,384.7 L363.5,388.8 L364.0,395.2 L364.5,403.2 L365.0,411.7 L365.5,420.0 L366.0,429.0 L366.5,438.7 L367.0,448.3 L367.5,457.2 L368.0,465.1 L368.5,472.5 L369.0,479.6 L369.5,486.5 L370.0,493.2 L370.5,499.7 L371.0,506.6 L371.5,514.1 L372.0,521.0 L372.5,526.1 L373.0,528.8 L373.5,530.7 L374.0,532.2 L374.5,533.3 L375.0,534.1 L375.5,534.6 L376.0,535.1 L376.5,535.4 L377.0,535.7 L377.5,536.1 L378.0,536.5 L378.5,537.0 L379.0,537.8 L379.5,538.8 L380.0,539.9 L380.5,540.9 L381.0,541.7 L381.5,542.2 L382.0,542.3 L382.5,542.0 L383.0,541.4 L383.5,540.6 L384.0,539.7 L384.5,538.9 L385.0,538.1 L385.5,537.4 L386.0,536.9 L386.5,536.4 L387.0,535.9 L387.5,535.3 L388.0,534.6 L388.5,533.8 L389.0,532.8 L389.5,531.7 L390.0,530.3 L390.5,528.5 L391.0,526.2 L391.5,520.2 L392.0,511.1 L392.5,501.8 L393.0,493.6 L393.5,485.4 L394.0,477.0 L394.5,468.5 L395.0,459.7 L395.5,450.2 L396.0,440.2 L396.5,430.3 L397.0,420.9 L397.5,412.4 L398.0,403.9 L398.5,395.9 L399.0,389.3 L399.5,385.0 L400.0,382.2 L400.5,380.1 L401.0,378.3 L401.5,376.6 L402.0,374.6 L402.5,372.7 L403.0,370.9 L403.5,369.0 L404.0,366.7 L404.5,363.9 L405.0,360.0 L405.5,354.8 L406.0,348.9 L406.5,342.4 L407.0,335.7 L407.5,329.0 L408.0,321.6 L408.5,313.6 L409.0,305.4 L409.5,297.3 L410.0,289.4 L410.5,281.6 L411.0,273.8 L411.5,266.0 L412.0,258.5 L412.5,251.4 L413.0,244.8 L413.5,238.2 L414.0,232.0 L414.5,226.7 L415.0,222.7 L415.5,219.5 L416.0,216.8 L416.5,214.8 L417.0,213.6 L417.5,212.8 L418.0,212.1 L418.5,211.6 L419.0,211.0 L419.5,210.4 L420.0,209.9 L420.5,209.3 L421.0,208.8 L421.5,208.1 L422.0,207.0 L422.5,205.6 L423.0,204.5 L423.5,204.3 L424.0,204.9 L424.5,206.0 L425.0,207.1 L425.5,207.9 L426.0,208.4 L426.5,209.0 L427.0,209.5 L427.5,210.1 L428.0,210.9 L428.5,211.7 L429.0,212.6 L429.5,213.5 L430.0,214.5 L430.5,215.4 L431.0,216.2 L431.5,217.0 L432.0,217.7 L432.5,218.5 L433.0,219.5 L433.5,221.0 L434.0,223.8 L434.5,227.9 L435.0,232.4 L435.5,237.3 L436.0,243.0 L436.5,249.7 L437.0,257.9 L437.5,267.5 L438.0,277.9 L438.5,288.3 L439.0,298.6 L439.5,309.6 L440.0,320.5 L440.5,330.6 L441.0,339.9 L441.5,349.3 L442.0,357.6 L442.5,363.5 L443.0,366.7 L443.5,369.1 L444.0,371.0 L444.5,372.6 L445.0,374.5 L445.5,376.4 L446.0,378.2 L446.5,380.0 L447.0,382.1 L447.5,384.7 L448.0,388.9 L448.5,395.3 L449.0,403.3 L449.5,411.8 L450.0,420.1 L450.5,429.2 L451.0,438.9 L451.5,448.4 L452.0,457.3 L452.5,465.2 L453.0,472.7 L453.5,479.8 L454.0,486.6 L454.5,493.3 L455.0,499.9 L455.5,506.8 L456.0,514.2 L456.5,521.1 L457.0,526.2 L457.5,528.8 L458.0,530.8 L458.5,532.3 L459.0,533.4 L459.5,534.1 L460.0,534.6 L460.5,535.1 L461.0,535.4 L461.5,535.7 L462.0,536.1 L462.5,536.5 L463.0,537.0 L463.5,537.8 L464.0,538.8 L464.5,539.9 L465.0,540.9 L465.5,541.7 L466.0,542.2 L466.5,542.3 L467.0,542.0 L467.5,541.4 L468.0,540.6 L468.5,539.7 L469.0,538.9 L469.5,538.1 L470.0,537.4 L470.5,536.9 L471.0,536.4 L471.5,535.9 L472.0,535.3 L472.5,534.5 L473.0,533.7 L473.5,532.8 L474.0,531.7 L474.5,530.3 L475.0,528.5 L475.5,526.2 L476.0,520.1 L476.5,510.9 L477.0,501.6 L477.5,493.5 L478.0,485.2 L478.5,476.9 L479.0,468.3 L479.5,459.5 L480.0,450.0 L480.5,440.0 L481.0,430.1 L481.5,420.7 L482.0,412.3 L482.5,403.7 L483.0,395.7 L483.5,389.2 L484.0,384.9 L484.5,382.2 L485.0,380.1 L485.5,378.3 L486.0,376.6 L486.5,374.6 L487.0,372.7 L487.5,370.9 L488.0,368.9 L488.5,366.7 L489.0,363.9 L489.5,359.9 L490.0,354.7 L490.5,348.7 L491.0,342.3 L491.5,335.6 L492.0,328.9 L492.5,321.4 L493.0,313.5 L493.5,305.3 L494.0,297.1 L494.5,289.3 L495.0,281.5 L495.5,273.6 L496.0,265.8 L496.5,258.3 L497.0,251.3 L497.5,244.7 L498.0,238.1 L498.5,231.9 L499.0,226.6 L499.5,222.6 L500.0,219.5 L500.5,216.8 L501.0,214.8 L501.5,213.6 L502.0,212.7 L502.5,212.1 L503.0,211.6 L503.5,211.0 L504.0,210.4 L504.5,209.9 L505.0,209.3 L505.5,208.7 L506.0,208.1 L506.5,206.9 L507.0,205.5 L507.5,204.5 L508.0,204.3 L508.5,205.0 L509.0,206.0 L509.5,207.1 L510.0,207.9 L510.5,208.4 L511.0,209.0 L511.5,209.5 L512.0,210.1 L512.5,210.9 L513.0,211.7 L513.5,212.6 L514.0,213.6 L514.5,214.5 L515.0,215.4 L515.5,216.3 L516.0,217.0 L516.5,217.7 L517.0,218.5 L517.5,219.6 L518.0,221.0 L518.5,223.9 L519.0,228.0 L519.5,232.5 L520.0,237.4 L520.5,243.1 L521.0,249.8 L521.5,258.1 L522.0,267.7 L522.5,278.1 L523.0,288.5 L523.5,298.8 L524.0,309.8 L524.5,320.7 L525.0,330.8 L525.5,340.1 L526.0,349.5 L526.5,357.7 L527.0,363.6 L527.5,366.8 L528.0,369.1 L528.5,371.0 L529.0,372.7 L529.5,374.5 L530.0,376.5 L530.5,378.2 L531.0,380.0 L531.5,382.1 L532.0,384.8 L532.5,389.0 L533.0,395.5 L533.5,403.5 L534.0,412.0 L534.5,420.3 L535.0,429.4 L535.5,439.0 L536.0,448.6 L536.5,457.5 L537.0,465.4 L537.5,472.8 L538.0,479.9 L538.5,486.8 L539.0,493.4 L539.5,500.0 L540.0,506.9 L540.5,514.4 L541.0,521.2 L541.5,526.3 L542.0,528.9 L542.5,530.8 L543.0,532.3 L543.5,533.4 L544.0,534.1 L544.5,534.7 L545.0,535.1 L545.5,535.4 L546.0,535.7 L546.5,536.1 L547.0,536.5 L547.5,537.0 L548.0,537.9 L548.5,538.9 L549.0,539.9 L549.5,540.9 L550.0,541.7 L550.5,542.2 L551.0,542.3 L551.5,541.9 L552.0,541.4 L552.5,540.6 L553.0,539.7 L553.5,538.8 L554.0,538.1 L554.5,537.4 L555.0,536.9 L555.5,536.4 L556.0,535.9 L556.5,535.3 L557.0,534.5 L557.5,533.7 L558.0,532.8 L558.5,531.7 L559.0,530.3 L559.5,528.5 L560.0,526.1 L560.5,519.9 L561.0,510.7 L561.5,501.5 L562.0,493.3 L562.5,485.1 L563.0,476.7 L563.5,468.1 L564.0,459.3 L564.5,449.9 L565.0,439.8 L565.5,429.9 L566.0,420.6 L566.5,412.1 L567.0,403.6 L567.5,395.6 L568.0,389.1 L568.5,384.9 L569.0,382.1 L569.5,380.0 L570.0,378.3 L570.5,376.5 L571.0,374.5 L571.5,372.6 L572.0,370.8 L572.5,368.9 L573.0,366.6 L573.5,363.8 L574.0,359.8 L574.5,354.6 L575.0,348.6 L575.5,342.1 L576.0,335.5 L576.5,328.7 L577.0,321.3 L577.5,313.3 L578.0,305.1 L578.5,297.0 L579.0,289.1 L579.5,281.3 L580.0,273.5 L580.5,265.7 L581.0,258.2 L581.5,251.2 L582.0,244.6 L582.5,238.0 L583.0,231.8 L583.5,226.5 L584.0,222.5 L584.5,219.4 L585.0,216.7 L585.5,214.7 L586.0,213.5 L586.5,212.7 L587.0,212.1 L587.5,211.6 L588.0,211.0 L588.5,210.4 L589.0,209.9 L589.5,209.3 L590.0,208.7 L590.5,208.0 L591.0,206.9 L591.5,205.5 L592.0,204.5 L592.5,204.3 L593.0,205.0 L593.5,206.0 L594.0,207.1 L594.5,207.9 L595.0,208.5 L595.5,209.0 L596.0,209.5 L596.5,210.1 L597.0,210.9 L597.5,211.7 L598.0,212.6 L598.5,213.6 L599.0,214.5 L599.5,215.4 L600.0,216.3 L600.5,217.0 L601.0,217.7 L601.5,218.5 L602.0,219.6 L602.5,221.0 L603.0,223.9 L603.5,228.1 L604.0,232.6 L604.5,237.5 L605.0,243.3 L605.5,250.0 L606.0,258.3 L606.5,267.9 L607.0,278.3 L607.5,288.7 L608.0,299.1 L608.5,310.1 L609.0,321.0 L609.5,331.0 L610.0,340.3 L610.5,349.7 L611.0,357.9 L611.5,363.7 L612.0,366.8 L612.5,369.2 L613.0,371.0 L613.5,372.7 L614.0,374.5 L614.5,376.5 L615.0,378.3 L615.5,380.0 L616.0,382.1 L616.5,384.9 L617.0,389.1 L617.5,395.6 L618.0,403.7 L618.5,412.2 L619.0,420.5 L619.5,429.6 L620.0,439.2 L620.5,448.8 L621.0,457.7 L621.5,465.5 L622.0,473.0 L622.5,480.1 L623.0,486.9 L623.5,493.6 L624.0,500.1 L624.5,507.1 L625.0,514.5 L625.5,521.3 L626.0,526.3 L626.5,528.9 L627.0,530.8 L627.5,532.3 L628.0,533.4 L628.5,534.1 L629.0,534.7 L629.5,535.1 L630.0,535.4 L630.5,535.7 L631.0,536.1 L631.5,536.5 L632.0,537.1 L632.5,537.9 L633.0,538.9 L633.5,539.9 L634.0,540.9 L634.5,541.7 L635.0,542.2 L635.5,542.3 L636.0,541.9 L636.5,541.3 L637.0,540.6 L637.5,539.7 L638.0,538.8 L638.5,538.0 L639.0,537.4 L639.5,536.9 L640.0,536.4 L640.5,535.9 L641.0,535.3 L641.5,534.5 L642.0,533.7 L642.5,532.8 L643.0,531.7 L643.5,530.2 L644.0,528.4 L644.5,526.0 L645.0,519.7 L645.5,510.5 L646.0,501.3 L646.5,493.1 L647.0,484.9 L647.5,476.5 L648.0,468.0 L648.5,459.1 L649.0,449.7 L649.5,439.6 L650.0,429.7 L650.5,420.4 L651.0,411.9 L651.5,403.4 L652.0,395.4 L652.5,389.0 L653.0,384.8 L653.5,382.1 L654.0,380.0 L654.5,378.2 L655.0,376.5 L655.5,374.5 L656.0,372.6 L656.5,370.8 L657.0,368.9 L657.5,366.6 L658.0,363.7 L658.5,359.7 L659.0,354.5 L659.5,348.5 L660.0,342.0 L660.5,335.3 L661.0,328.6 L661.5,321.1 L662.0,313.2 L662.5,304.9 L663.0,296.8 L663.5,289.0 L664.0,281.2 L664.5,273.3 L665.0,265.5 L665.5,258.1 L666.0,251.0 L666.5,244.4 L667.0,237.8 L667.5,231.7 L668.0,226.4 L668.5,222.5 L669.0,219.3 L669.5,216.7 L670.0,214.7 L670.5,213.5" stroke="#3ad83a"/>
<path d="M73.0,541.6 L73.5,540.9 L74.0,540.1 L74.5,539.2 L75.0,538.4 L75.5,537.7 L76.0,537.1 L76.5,536.6 L77.0,536.1 L77.5,535.6 L78.0,534.8 L78.5,534.1 L79.0,533.2 L79.5,532.2 L80.0,530.9 L80.5,529.3 L81.0,527.2 L81.5,523.1 L82.0,514.7 L82.5,505.1 L83.0,496.7 L83.5,488.5 L84.0,480.2 L84.5,471.7 L85.0,462.9 L85.5,453.8 L86.0,443.9 L86.5,433.8 L87.0,424.2 L87.5,415.5 L88.0,406.9 L88.5,398.6 L89.0,391.4 L89.5,386.2 L90.0,383.1 L90.5,380.8 L91.0,378.9 L91.5,377.2 L92.0,375.3 L92.5,373.3 L93.0,371.5 L93.5,369.7 L94.0,367.6 L94.5,365.0 L95.0,361.4 L95.5,356.7 L96.0,350.9 L96.5,344.6 L97.0,337.9 L97.5,331.3 L98.0,324.1 L98.5,316.3 L99.0,308.1 L99.5,299.9 L100.0,291.9 L100.5,284.2 L101.0,276.3 L101.5,268.4 L102.0,260.8 L102.5,253.6 L103.0,246.9 L103.5,240.3 L104.0,233.9 L104.5,228.2 L105.0,223.7 L105.5,220.4 L106.0,217.6 L106.5,215.3 L107.0,213.9 L107.5,213.0 L108.0,212.3 L108.5,211.7 L109.0,211.2 L109.5,210.6 L110.0,210.0 L110.5,209.5 L111.0,208.9 L111.5,208.3 L112.0,207.3 L112.5,206.0 L113.0,204.7 L113.5,204.2 L114.0,204.7 L114.5,205.7 L115.0,206.8 L115.5,207.7 L116.0,208.3 L116.5,208.8 L117.0,209.3 L117.5,209.9 L118.0,210.6 L118.5,211.5 L119.0,212.4 L119.5,213.3 L120.0,214.2 L120.5,215.2 L121.0,216.0 L121.5,216.8 L122.0,217.5 L122.5,218.3 L123.0,219.2 L123.5,220.5 L124.0,222.9 L124.5,226.8 L125.0,231.3 L125.5,236.0 L126.0,241.5 L126.5,248.0 L127.0,255.8 L127.5,265.1 L128.0,275.4 L128.5,285.9 L129.0,296.1 L129.5,307.1 L130.0,318.1 L130.5,328.4 L131.0,337.8 L131.5,347.3 L132.0,355.9 L132.5,362.5 L133.0,366.1 L133.5,368.6 L134.0,370.6 L134.5,372.3 L135.0,374.1 L135.5,376.1 L136.0,377.8 L136.5,379.6 L137.0,381.6 L137.5,384.1 L138.0,387.8 L138.5,393.9 L139.0,401.6 L139.5,410.1 L140.0,418.5 L140.5,427.4 L141.0,437.0 L141.5,446.6 L142.0,455.7 L142.5,463.8 L143.0,471.3 L143.5,478.5 L144.0,485.4 L144.5,492.1 L145.0,498.7 L145.5,505.5 L146.0,512.9 L146.5,520.0 L147.0,525.5 L147.5,528.4 L148.0,530.5 L148.5,532.0 L149.0,533.2 L149.5,534.0 L150.0,534.6 L150.5,535.0 L151.0,535.4 L151.5,535.7 L152.0,536.0 L152.5,536.4 L153.0,536.9 L153.5,537.7 L154.0,538.7 L154.5,539.7 L155.0,540.7 L155.5,541.6 L156.0,542.1 L156.5,542.3 L157.0,542.0 L157.5,541.5 L158.0,540.7 L158.5,539.9 L159.0,539.0 L159.5,538.2 L160.0,537.5 L160.5,537.0 L161.0,536.5 L161.5,536.0 L162.0,535.4 L162.5,534.6 L163.0,533.9 L163.5,533.0 L164.0,531.9 L164.5,530.5 L165.0,528.7 L165.5,526.6 L166.0,521.0 L166.5,512.0 L167.0,502.6 L167.5,494.4 L168.0,486.2 L168.5,477.8 L169.0,469.3 L169.5,460.5 L170.0,451.1 L170.5,441.1 L171.0,431.1 L171.5,421.6 L172.0,413.1 L172.5,404.5 L173.0,396.4 L173.5,389.7 L174.0,385.2 L174.5,382.4 L175.0,380.3 L175.5,378.4 L176.0,376.7 L176.5,374.8 L177.0,372.8 L177.5,371.0 L178.0,369.1 L178.5,366.9 L179.0,364.1 L179.5,360.2 L180.0,355.1 L180.5,349.2 L181.0,342.7 L181.5,336.1 L182.0,329.4 L182.5,322.0 L183.0,314.0 L183.5,305.8 L184.0,297.6 L184.5,289.8 L185.0,282.0 L185.5,274.1 L186.0,266.3 L186.5,258.7 L187.0,251.7 L187.5,245.0 L188.0,238.4 L188.5,232.2 L189.0,226.8 L189.5,222.8 L190.0,219.6 L190.5,216.9 L191.0,214.8 L191.5,213.6 L192.0,212.8 L192.5,212.1 L193.0,211.6 L193.5,211.0 L194.0,210.4 L194.5,209.9 L195.0,209.4 L195.5,208.8 L196.0,208.1 L196.5,207.0 L197.0,205.6 L197.5,204.5 L198.0,204.3 L198.5,204.9 L199.0,206.0 L199.5,207.1 L200.0,207.9 L200.5,208.4 L201.0,209.0 L201.5,209.5 L202.0,210.1 L202.5,210.9 L203.0,211.7 L203.5,212.6 L204.0,213.6 L204.5,214.5 L205.0,215.4 L205.5,216.3 L206.0,217.0 L206.5,217.7 L207.0,218.5 L207.5,219.6 L208.0,221.0 L208.5,223.9 L209.0,228.0 L209.5,232.5 L210.0,237.5 L210.5,243.2 L211.0,250.0 L211.5,258.3 L212.0,268.0 L212.5,278.3 L213.0,288.7 L213.5,299.1 L214.0,310.2 L214.5,321.1 L215.0,331.1 L215.5,340.5 L216.0,349.8 L216.5,358.0 L217.0,363.8 L217.5,366.9 L218.0,369.2 L218.5,371.1 L219.0,372.8 L219.5,374.6 L220.0,376.6 L220.5,378.3 L221.0,380.1 L221.5,382.2 L222.0,385.0 L222.5,389.3 L223.0,395.9 L223.5,404.0 L224.0,412.5 L224.5,420.8 L225.0,430.0 L225.5,439.7 L226.0,449.3 L226.5,458.1 L227.0,465.9 L227.5,473.3 L228.0,480.4 L228.5,487.3 L229.0,493.9 L229.5,500.5 L230.0,507.5 L230.5,515.0 L231.0,521.7 L231.5,526.6 L232.0,529.1 L232.5,530.9 L233.0,532.4 L233.5,533.4 L234.0,534.2 L234.5,534.7 L235.0,535.1 L235.5,535.5 L236.0,535.8 L236.5,536.1 L237.0,536.5 L237.5,537.1 L238.0,538.0 L238.5,539.0 L239.0,540.0 L239.5,541.0 L240.0,541.8 L240.5,542.2 L241.0,542.2 L241.5,541.9 L242.0,541.3 L242.5,540.5 L243.0,539.6 L243.5,538.7 L244.0,538.0 L244.5,537.4 L245.0,536.9 L245.5,536.4 L246.0,535.8 L246.5,535.2 L247.0,534.4 L247.5,533.6 L248.0,532.7 L248.5,531.5 L249.0,530.0 L249.5,528.2 L250.0,525.5 L250.5,518.7 L251.0,509.3 L251.5,500.3 L252.0,492.1 L252.5,483.8 L253.0,475.4 L253.5,466.8 L254.0,457.9 L254.5,448.3 L255.0,438.3 L255.5,428.3 L256.0,419.2 L256.5,410.7 L257.0,402.2 L257.5,394.4 L258.0,388.2 L258.5,384.4 L259.0,381.8 L259.5,379.7 L260.0,378.0 L260.5,376.2 L261.0,374.2 L261.5,372.3 L262.0,370.5 L262.5,368.5 L263.0,366.2 L263.5,363.2 L264.0,358.9 L264.5,353.5 L265.0,347.4 L265.5,340.9 L266.0,334.2 L266.5,327.4 L267.0,319.8 L267.5,311.7 L268.0,303.5 L268.5,295.4 L269.0,287.6 L269.5,279.7 L270.0,271.9 L270.5,264.1 L271.0,256.7 L271.5,249.8 L272.0,243.2 L272.5,236.6 L273.0,230.6 L273.5,225.5 L274.0,221.8 L274.5,218.8 L275.0,216.2 L275.5,214.4 L276.0,213.3 L276.5,212.6 L277.0,212.0 L277.5,211.4 L278.0,210.8 L278.5,210.3 L279.0,209.7 L279.5,209.2 L280.0,208.6 L280.5,207.8 L281.0,206.6 L281.5,205.2 L282.0,204.3 L282.5,204.4 L283.0,205.2 L283.5,206.3 L284.0,207.3 L284.5,208.0 L285.0,208.6 L285.5,209.1 L286.0,209.7 L286.5,210.3 L287.0,211.1 L287.5,212.0 L288.0,212.9 L288.5,213.8 L289.0,214.8 L289.5,215.7 L290.0,216.5 L290.5,217.2 L291.0,217.9 L291.5,218.8 L292.0,219.9 L292.5,221.7 L293.0,225.0 L293.5,229.3 L294.0,233.8 L294.5,239.0 L295.0,245.0 L295.5,252.1 L296.0,260.9 L296.5,270.8 L297.0,281.3 L297.5,291.6 L298.0,302.2 L298.5,313.3 L299.0,324.0 L299.5,333.7 L300.0,343.1 L300.5,352.3 L301.0,359.9 L301.5,364.8 L302.0,367.6 L302.5,369.8 L303.0,371.5 L303.5,373.2 L304.0,375.2 L304.5,377.1 L305.0,378.8 L305.5,380.6 L306.0,382.9 L306.5,385.9 L307.0,390.9 L307.5,398.1 L308.0,406.4 L308.5,414.9 L309.0,423.3 L309.5,432.7 L310.0,442.4 L310.5,451.8 L311.0,460.3 L311.5,468.0 L312.0,475.4 L312.5,482.4 L313.0,489.1 L313.5,495.8 L314.0,502.4 L314.5,509.6 L315.0,517.0 L315.5,523.3 L316.0,527.4 L316.5,529.6 L317.0,531.4 L317.5,532.7 L318.0,533.7 L318.5,534.3 L319.0,534.8 L319.5,535.2 L320.0,535.5 L320.5,535.9 L321.0,536.2 L321.5,536.7 L322.0,537.3 L322.5,538.2 L323.0,539.3 L323.5,540.3 L324.0,541.2 L324.5,541.9 L325.0,542.3 L325.5,542.2 L326.0,541.7 L326.5,541.1 L327.0,540.2 L327.5,539.4 L328.0,538.5 L328.5,537.8 L329.0,537.2 L329.5,536.7 L330.0,536.2 L330.5,535.7 L331.0,535.0 L331.5,534.2 L332.0,533.4 L332.5,532.4 L333.0,531.1 L333.5,529.6 L334.0,527.6 L334.5,524.1 L335.0,516.2 L335.5,506.6 L336.0,498.0 L336.5,489.8 L337.0,481.5 L337.5,473.0 L338.0,464.4 L338.5,455.3 L339.0,445.5 L339.5,435.4 L340.0,425.7 L340.5,416.8 L341.0,408.3 L341.5,399.9 L342.0,392.4 L342.5,386.9 L343.0,383.6 L343.5,381.1 L344.0,379.2 L344.5,377.5 L345.0,375.7 L345.5,373.6 L346.0,371.8 L346.5,370.0 L347.0,367.9 L347.5,365.4 L348.0,362.1 L348.5,357.5 L349.0,351.9 L349.5,345.6 L350.0,339.0 L350.5,332.4 L351.0,325.3 L351.5,317.6 L352.0,309.4 L352.5,301.2 L353.0,293.2 L353.5,285.4 L354.0,277.5 L354.5,269.7 L355.0,262.0 L355.5,254.7 L356.0,247.9 L356.5,241.3 L357.0,234.8 L357.5,229.0 L358.0,224.3 L358.5,220.9 L359.0,218.0 L359.5,215.6 L360.0,214.1 L360.5,213.1 L361.0,212.4 L361.5,211.8 L362.0,211.3 L362.5,210.7 L363.0,210.1 L363.5,209.6 L364.0,209.0 L364.5,208.4 L365.0,207.5 L365.5,206.2 L366.0,204.9 L366.5,204.2 L367.0,204.6 L367.5,205.5 L368.0,206.6 L368.5,207.6 L369.0,208.2 L369.5,208.7 L370.0,209.3 L370.5,209.8 L371.0,210.5 L371.5,211.3 L372.0,212.2 L372.5,213.1 L373.0,214.1 L373.5,215.0 L374.0,215.9 L374.5,216.7 L375.0,217.4 L375.5,218.1 L376.0,219.1 L376.5,220.3 L377.0,222.4 L377.5,226.1 L378.0,230.6 L378.5,235.2 L379.0,240.6 L379.5,246.9 L380.0,254.4 L380.5,263.6 L381.0,273.7 L381.5,284.2 L382.0,294.5 L382.5,305.3 L383.0,316.3 L383.5,326.9 L384.0,336.3 L384.5,345.8 L385.0,354.6 L385.5,361.6 L386.0,365.6 L386.5,368.3 L387.0,370.3 L387.5,372.0 L388.0,373.8 L388.5,375.7 L389.0,377.6 L389.5,379.3 L390.0,381.2 L390.5,383.7 L391.0,387.1 L391.5,392.8 L392.0,400.3 L392.5,408.8 L393.0,417.2 L393.5,425.9 L394.0,435.4 L394.5,445.1 L395.0,454.3 L395.5,462.5 L396.0,470.1 L396.5,477.3 L397.0,484.3 L397.5,491.0 L398.0,497.6 L398.5,504.3 L399.0,511.7 L399.5,518.9 L400.0,524.7 L400.5,528.1 L401.0,530.2 L401.5,531.8 L402.0,533.0 L402.5,533.9 L403.0,534.5 L403.5,534.9 L404.0,535.3 L404.5,535.6 L405.0,536.0 L405.5,536.3 L406.0,536.8 L406.5,537.6 L407.0,538.5 L407.5,539.6 L408.0,540.6 L408.5,541.5 L409.0,542.1 L409.5,542.3 L410.0,542.1 L410.5,541.6 L411.0,540.8 L411.5,540.0 L412.0,539.1 L412.5,538.3 L413.0,537.6 L413.5,537.1 L414.0,536.6 L414.5,536.1 L415.0,535.5 L415.5,534.8 L416.0,534.0 L416.5,533.1 L417.0,532.0 L417.5,530.7 L418.0,529.0 L418.5,526.9 L419.0,522.2 L419.5,513.5 L420.0,504.0 L420.5,495.7 L421.0,487.5 L421.5,479.2 L422.0,470.6 L422.5,461.9 L423.0,452.6 L423.5,442.7 L424.0,432.6 L424.5,423.1 L425.0,414.5 L425.5,405.9 L426.0,397.7 L426.5,390.7 L427.0,385.8 L427.5,382.8 L428.0,380.6 L428.5,378.7 L429.0,377.0 L429.5,375.1 L430.0,373.1 L430.5,371.3 L431.0,369.4 L431.5,367.3 L432.0,364.6 L432.5,360.9 L433.0,356.0 L433.5,350.2 L434.0,343.8 L434.5,337.1 L435.0,330.5 L435.5,323.2 L436.0,315.3 L436.5,307.1 L437.0,298.9 L437.5,291.0 L438.0,283.2 L438.5,275.3 L439.0,267.5 L439.5,259.9 L440.0,252.8 L440.5,246.1 L441.0,239.5 L441.5,233.1 L442.0,227.6 L442.5,223.3 L443.0,220.1 L443.5,217.3 L444.0,215.1 L444.5,213.8 L445.0,212.9 L445.5,212.2 L446.0,211.7 L446.5,211.1 L447.0,210.5 L447.5,210.0 L448.0,209.4 L448.5,208.9 L449.0,208.2 L449.5,207.2 L450.0,205.8 L450.5,204.6 L451.0,204.3 L451.5,204.8 L452.0,205.8 L452.5,206.9 L453.0,207.8 L453.5,208.4 L454.0,208.9 L454.5,209.4 L455.0,210.0 L455.5,210.7 L456.0,211.6 L456.5,212.5 L457.0,213.4 L457.5,214.4 L458.0,215.3 L458.5,216.1 L459.0,216.9 L459.5,217.6 L460.0,218.4 L460.5,219.4 L461.0,220.7 L461.5,223.3 L462.0,227.3 L462.5,231.8 L463.0,236.6 L463.5,242.3 L464.0,248.8 L464.5,256.8 L465.0,266.3 L465.5,276.7 L466.0,287.1 L466.5,297.4 L467.0,308.4 L467.5,319.4 L468.0,329.6 L468.5,338.9 L469.0,348.4 L469.5,356.8 L470.0,363.1 L470.5,366.5 L471.0,368.9 L471.5,370.8 L472.0,372.5 L472.5,374.3 L473.0,376.3 L473.5,378.0 L474.0,379.8 L474.5,381.9 L475.0,384.5 L475.5,388.4 L476.0,394.7 L476.5,402.6 L477.0,411.2 L477.5,419.5 L478.0,428.5 L478.5,438.1 L479.0,447.8 L479.5,456.7 L480.0,464.7 L480.5,472.2 L481.0,479.3 L481.5,486.2 L482.0,492.9 L482.5,499.5 L483.0,506.3 L483.5,513.8 L484.0,520.7 L484.5,526.0 L485.0,528.7 L485.5,530.7 L486.0,532.2 L486.5,533.3 L487.0,534.1 L487.5,534.6 L488.0,535.0 L488.5,535.4 L489.0,535.7 L489.5,536.1 L490.0,536.5 L490.5,537.0 L491.0,537.8 L491.5,538.8 L492.0,539.9 L492.5,540.9 L493.0,541.7 L493.5,542.2 L494.0,542.3 L494.5,542.0 L495.0,541.4 L495.5,540.6 L496.0,539.8 L496.5,538.9 L497.0,538.1 L497.5,537.4 L498.0,536.9 L498.5,536.4 L499.0,535.9 L499.5,535.3 L500.0,534.5 L500.5,533.8 L501.0,532.8 L501.5,531.7 L502.0,530.3 L502.5,528.5 L503.0,526.2 L503.5,520.1 L504.0,510.8 L504.5,501.6 L505.0,493.4 L505.5,485.2 L506.0,476.8 L506.5,468.2 L507.0,459.4 L507.5,449.9 L508.0,439.9 L508.5,429.9 L509.0,420.6 L509.5,412.1 L510.0,403.5 L510.5,395.5 L511.0,389.0 L511.5,384.8 L512.0,382.1 L512.5,380.0 L513.0,378.2 L513.5,376.5 L514.0,374.5 L514.5,372.6 L515.0,370.8 L515.5,368.9 L516.0,366.6 L516.5,363.7 L517.0,359.7 L517.5,354.5 L518.0,348.5 L518.5,341.9 L519.0,335.3 L519.5,328.5 L520.0,321.0 L520.5,313.0 L521.0,304.8 L521.5,296.7 L522.0,288.8 L522.5,281.0 L523.0,273.1 L523.5,265.4 L524.0,257.9 L524.5,250.8 L525.0,244.3 L525.5,237.6 L526.0,231.5 L526.5,226.2 L527.0,222.4 L527.5,219.2 L528.0,216.6 L528.5,214.6 L529.0,213.5 L529.5,212.7 L530.0,212.1 L530.5,211.5 L531.0,210.9 L531.5,210.4 L532.0,209.8 L532.5,209.3 L533.0,208.7 L533.5,208.0 L534.0,206.8 L534.5,205.4 L535.0,204.4 L535.5,204.3 L536.0,205.1 L536.5,206.1 L537.0,207.2 L537.5,207.9 L538.0,208.5 L538.5,209.0 L539.0,209.6 L539.5,210.2 L540.0,211.0 L540.5,211.8 L541.0,212.7 L541.5,213.7 L542.0,214.6 L542.5,215.5 L543.0,216.4 L543.5,217.1 L544.0,217.8 L544.5,218.6 L545.0,219.7 L545.5,221.3 L546.0,224.4 L546.5,228.6 L547.0,233.1 L547.5,238.1 L548.0,244.0 L548.5,250.9 L549.0,259.4 L549.5,269.2 L550.0,279.6 L550.5,290.0 L551.0,300.5 L551.5,311.5 L552.0,322.3 L552.5,332.2 L553.0,341.6 L553.5,350.9 L554.0,358.9 L554.5,364.2 L555.0,367.2 L555.5,369.5 L556.0,371.3 L556.5,373.0 L557.0,374.8 L557.5,376.8 L558.0,378.5 L558.5,380.3 L559.0,382.5 L559.5,385.4 L560.0,390.0 L560.5,396.8 L561.0,405.0 L561.5,413.5 L562.0,421.9 L562.5,431.1 L563.0,440.8 L563.5,450.4 L564.0,459.1 L564.5,466.8 L565.0,474.2 L565.5,481.3 L566.0,488.1 L566.5,494.7 L567.0,501.3 L567.5,508.4 L568.0,515.9 L568.5,522.4 L569.0,527.0 L569.5,529.3 L570.0,531.1 L570.5,532.5 L571.0,533.6 L571.5,534.2 L572.0,534.8 L572.5,535.2 L573.0,535.5 L573.5,535.8 L574.0,536.2 L574.5,536.6 L575.0,537.2 L575.5,538.1 L576.0,539.1 L576.5,540.1 L577.0,541.1 L577.5,541.9 L578.0,542.2 L578.5,542.2 L579.0,541.8 L579.5,541.2 L580.0,540.4 L580.5,539.5 L581.0,538.6 L581.5,537.9 L582.0,537.3 L582.5,536.8 L583.0,536.3 L583.5,535.8 L584.0,535.1 L584.5,534.3 L585.0,533.5 L585.5,532.5 L586.0,531.3 L586.5,529.8 L587.0,527.9 L587.5,525.0 L588.0,517.7 L588.5,508.1 L589.0,499.3 L589.5,491.1 L590.0,482.8 L590.5,474.4 L591.0,465.8 L591.5,456.8 L592.0,447.1 L592.5,437.0 L593.0,427.2 L593.5,418.2 L594.0,409.7 L594.5,401.2 L595.0,393.5 L595.5,387.6 L596.0,384.0 L596.5,381.5 L597.0,379.5 L597.5,377.8 L598.0,376.0 L598.5,374.0 L599.0,372.1 L599.5,370.3 L600.0,368.3 L600.5,365.9 L601.0,362.7 L601.5,358.3 L602.0,352.8 L602.5,346.7 L603.0,340.1 L603.5,333.4 L604.0,326.5 L604.5,318.8 L605.0,310.7 L605.5,302.5 L606.0,294.4 L606.5,286.7 L607.0,278.8 L607.5,270.9 L608.0,263.2 L608.5,255.8 L609.0,249.0 L609.5,242.4 L610.0,235.9 L610.5,229.9 L611.0,225.0 L611.5,221.4 L612.0,218.4 L612.5,216.0 L613.0,214.2 L613.5,213.2 L614.0,212.5 L614.5,211.9 L615.0,211.4 L615.5,210.8 L616.0,210.2 L616.5,209.7 L617.0,209.1 L617.5,208.5 L618.0,207.7 L618.5,206.4 L619.0,205.1 L619.5,204.3 L620.0,204.5 L620.5,205.3 L621.0,206.4 L621.5,207.4 L622.0,208.1 L622.5,208.7 L623.0,209.2 L623.5,209.7 L624.0,210.4 L624.5,211.2 L625.0,212.1 L625.5,213.0 L626.0,213.9 L626.5,214.9 L627.0,215.8 L627.5,216.6 L628.0,217.3 L628.5,218.0 L629.0,218.9 L629.5,220.1 L630.0,222.0 L630.5,225.5 L631.0,229.8 L631.5,234.4 L632.0,239.7 L632.5,245.8 L633.0,253.1 L633.5,262.0 L634.0,272.1 L634.5,282.5 L635.0,292.8 L635.5,303.5 L636.0,314.6 L636.5,325.2 L637.0,334.8 L637.5,344.3 L638.0,353.3 L638.5,360.7 L639.0,365.1 L639.5,367.9 L640.0,370.0 L640.5,371.7 L641.0,373.5 L641.5,375.4 L642.0,377.3 L642.5,379.0 L643.0,380.9 L643.5,383.2 L644.0,386.4 L644.5,391.7 L645.0,399.0 L645.5,407.4 L646.0,415.9 L646.5,424.4 L647.0,433.8 L647.5,443.6 L648.0,452.9 L648.5,461.3 L649.0,468.9 L649.5,476.2 L650.0,483.2 L650.5,489.9 L651.0,496.6 L651.5,503.2 L652.0,510.5 L652.5,517.8 L653.0,523.9 L653.5,527.7 L654.0,529.9 L654.5,531.6 L655.0,532.9 L655.5,533.8 L656.0,534.4 L656.5,534.9 L657.0,535.3 L657.5,535.6 L658.0,535.9 L658.5,536.3 L659.0,536.7 L659.5,537.4 L660.0,538.3 L660.5,539.4 L661.0,540.4 L661.5,541.3 L662.0,542.0 L662.5,542.3 L663.0,542.1 L663.5,541.7 L664.0,541.0 L664.5,540.1 L665.0,539.3 L665.5,538.4 L666.0,537.7 L666.5,537.1 L667.0,536.7 L667.5,536.2 L668.0,535.6 L668.5,534.9 L669.0,534.1 L669.5,533.3 L670.0,532.2 L670.5,531.0" stroke="#3c9fdc"/>
<path d="M73.0,320.3 L73.5,330.4 L74.0,339.7 L74.5,349.1 L75.0,357.4 L75.5,363.4 L76.0,366.6 L76.5,369.0 L77.0,370.9 L77.5,372.6 L78.0,374.4 L78.5,376.4 L79.0,378.1 L79.5,379.9 L80.0,381.9 L80.5,384.6 L81.0,388.6 L81.5,394.9 L82.0,402.8 L82.5,411.3 L83.0,419.6 L83.5,428.6 L84.0,438.2 L84.5,447.8 L85.0,456.8 L85.5,464.7 L86.0,472.2 L86.5,479.3 L87.0,486.1 L87.5,492.8 L88.0,499.3 L88.5,506.2 L89.0,513.6 L89.5,520.6 L90.0,525.8 L90.5,528.6 L91.0,530.6 L91.5,532.1 L92.0,533.3 L92.5,534.0 L93.0,534.6 L93.5,535.0 L94.0,535.4 L94.5,535.7 L95.0,536.0 L95.5,536.4 L96.0,537.0 L96.5,537.7 L97.0,538.7 L97.5,539.8 L98.0,540.8 L98.5,541.6 L99.0,542.1 L99.5,542.3 L100.0,542.0 L100.5,541.5 L101.0,540.7 L101.5,539.8 L102.0,539.0 L102.5,538.2 L103.0,537.5 L103.5,537.0 L104.0,536.5 L104.5,536.0 L105.0,535.4 L105.5,534.7 L106.0,533.9 L106.5,533.0 L107.0,531.9 L107.5,530.5 L108.0,528.8 L108.5,526.7 L109.0,521.3 L109.5,512.4 L110.0,503.0 L110.5,494.8 L111.0,486.6 L111.5,478.3 L112.0,469.8 L112.5,461.0 L113.0,451.8 L113.5,441.8 L114.0,431.8 L114.5,422.3 L115.0,413.8 L115.5,405.3 L116.0,397.1 L116.5,390.3 L117.0,385.5 L117.5,382.7 L118.0,380.5 L118.5,378.6 L119.0,376.9 L119.5,375.0 L120.0,373.0 L120.5,371.2 L121.0,369.4 L121.5,367.2 L122.0,364.5 L122.5,360.8 L123.0,355.9 L123.5,350.1 L124.0,343.7 L124.5,337.1 L125.0,330.4 L125.5,323.1 L126.0,315.3 L126.5,307.1 L127.0,299.0 L127.5,291.1 L128.0,283.3 L128.5,275.4 L129.0,267.6 L129.5,260.1 L130.0,252.9 L130.5,246.3 L131.0,239.7 L131.5,233.3 L132.0,227.8 L132.5,223.5 L133.0,220.2 L133.5,217.4 L134.0,215.2 L134.5,213.8 L135.0,212.9 L135.5,212.3 L136.0,211.7 L136.5,211.2 L137.0,210.6 L137.5,210.0 L138.0,209.5 L138.5,208.9 L139.0,208.3 L139.5,207.3 L140.0,205.9 L140.5,204.7 L141.0,204.2 L141.5,204.7 L142.0,205.7 L142.5,206.8 L143.0,207.7 L143.5,208.3 L144.0,208.8 L144.5,209.3 L145.0,209.9 L145.5,210.6 L146.0,211.5 L146.5,212.3 L147.0,213.3 L147.5,214.2 L148.0,215.1 L148.5,216.0 L149.0,216.8 L149.5,217.5 L150.0,218.2 L150.5,219.2 L151.0,220.5 L151.5,222.8 L152.0,226.6 L152.5,231.0 L153.0,235.7 L153.5,241.2 L154.0,247.5 L154.5,255.2 L155.0,264.4 L155.5,274.6 L156.0,285.0 L156.5,295.2 L157.0,306.1 L157.5,317.1 L158.0,327.5 L158.5,336.8 L159.0,346.3 L159.5,355.1 L160.0,361.9 L160.5,365.8 L161.0,368.4 L161.5,370.4 L162.0,372.1 L162.5,373.8 L163.0,375.8 L163.5,377.6 L164.0,379.3 L164.5,381.3 L165.0,383.7 L165.5,387.1 L166.0,392.8 L166.5,400.4 L167.0,408.8 L167.5,417.1 L168.0,425.8 L168.5,435.3 L169.0,445.0 L169.5,454.2 L170.0,462.4 L170.5,470.0 L171.0,477.2 L171.5,484.1 L172.0,490.8 L172.5,497.4 L173.0,504.0 L173.5,511.4 L174.0,518.6 L174.5,524.5 L175.0,528.0 L175.5,530.1 L176.0,531.7 L176.5,533.0 L177.0,533.8 L177.5,534.4 L178.0,534.9 L178.5,535.3 L179.0,535.6 L179.5,535.9 L180.0,536.3 L180.5,536.8 L181.0,537.5 L181.5,538.4 L182.0,539.5 L182.5,540.5 L183.0,541.4 L183.5,542.0 L184.0,542.3 L184.5,542.1 L185.0,541.6 L185.5,540.9 L186.0,540.1 L186.5,539.2 L187.0,538.4 L187.5,537.7 L188.0,537.1 L188.5,536.7 L189.0,536.2 L189.5,535.6 L190.0,534.9 L190.5,534.1 L191.0,533.3 L191.5,532.2 L192.0,531.0 L192.5,529.4 L193.0,527.4 L193.5,523.4 L194.0,515.3 L194.5,505.7 L195.0,497.3 L195.5,489.1 L196.0,480.8 L196.5,472.4 L197.0,463.7 L197.5,454.6 L198.0,444.8 L198.5,434.8 L199.0,425.1 L199.5,416.3 L200.0,407.8 L200.5,399.5 L201.0,392.1 L201.5,386.7 L202.0,383.4 L202.5,381.1 L203.0,379.2 L203.5,377.4 L204.0,375.6 L204.5,373.6 L205.0,371.8 L205.5,369.9 L206.0,367.9 L206.5,365.4 L207.0,362.1 L207.5,357.5 L208.0,351.9 L208.5,345.6 L209.0,339.1 L209.5,332.4 L210.0,325.4 L210.5,317.7 L211.0,309.6 L211.5,301.4 L212.0,293.4 L212.5,285.6 L213.0,277.8 L213.5,270.0 L214.0,262.3 L214.5,255.0 L215.0,248.3 L215.5,241.7 L216.0,235.2 L216.5,229.3 L217.0,224.6 L217.5,221.1 L218.0,218.2 L218.5,215.8 L219.0,214.1 L219.5,213.2 L220.0,212.5 L220.5,211.9 L221.0,211.3 L221.5,210.7 L222.0,210.2 L222.5,209.6 L223.0,209.1 L223.5,208.5 L224.0,207.7 L224.5,206.4 L225.0,205.0 L225.5,204.3 L226.0,204.5 L226.5,205.4 L227.0,206.5 L227.5,207.5 L228.0,208.1 L228.5,208.7 L229.0,209.2 L229.5,209.7 L230.0,210.4 L230.5,211.2 L231.0,212.1 L231.5,213.0 L232.0,213.9 L232.5,214.9 L233.0,215.8 L233.5,216.6 L234.0,217.2 L234.5,218.0 L235.0,218.9 L235.5,220.1 L236.0,221.9 L236.5,225.3 L237.0,229.7 L237.5,234.2 L238.0,239.4 L238.5,245.5 L239.0,252.7 L239.5,261.5 L240.0,271.5 L240.5,281.9 L241.0,292.1 L241.5,302.8 L242.0,313.8 L242.5,324.5 L243.0,334.1 L243.5,343.5 L244.0,352.6 L244.5,360.1 L245.0,364.9 L245.5,367.7 L246.0,369.8 L246.5,371.6 L247.0,373.3 L247.5,375.2 L248.0,377.1 L248.5,378.8 L249.0,380.6 L249.5,382.9 L250.0,385.9 L250.5,390.9 L251.0,398.0 L251.5,406.2 L252.0,414.7 L252.5,423.1 L253.0,432.4 L253.5,442.1 L254.0,451.5 L254.5,460.0 L255.0,467.7 L255.5,475.0 L256.0,482.0 L256.5,488.8 L257.0,495.4 L257.5,502.0 L258.0,509.2 L258.5,516.5 L259.0,522.9 L259.5,527.2 L260.0,529.5 L260.5,531.3 L261.0,532.6 L261.5,533.6 L262.0,534.3 L262.5,534.8 L263.0,535.2 L263.5,535.5 L264.0,535.8 L264.5,536.2 L265.0,536.6 L265.5,537.2 L266.0,538.1 L266.5,539.1 L267.0,540.2 L267.5,541.1 L268.0,541.9 L268.5,542.3 L269.0,542.2 L269.5,541.8 L270.0,541.2 L270.5,540.4 L271.0,539.5 L271.5,538.6 L272.0,537.9 L272.5,537.3 L273.0,536.8 L273.5,536.3 L274.0,535.8 L274.5,535.1 L275.0,534.3 L275.5,533.5 L276.0,532.6 L276.5,531.4 L277.0,529.9 L277.5,528.0 L278.0,525.2 L278.5,518.0 L279.0,508.6 L279.5,499.7 L280.0,491.5 L280.5,483.3 L281.0,474.9 L281.5,466.3 L282.0,457.4 L282.5,447.8 L283.0,437.8 L283.5,427.9 L284.0,418.8 L284.5,410.4 L285.0,401.9 L285.5,394.2 L286.0,388.1 L286.5,384.3 L287.0,381.7 L287.5,379.7 L288.0,377.9 L288.5,376.2 L289.0,374.2 L289.5,372.3 L290.0,370.5 L290.5,368.5 L291.0,366.2 L291.5,363.2 L292.0,359.0 L292.5,353.7 L293.0,347.6 L293.5,341.0 L294.0,334.4 L294.5,327.6 L295.0,320.1 L295.5,312.0 L296.0,303.8 L296.5,295.7 L297.0,288.0 L297.5,280.2 L298.0,272.3 L298.5,264.6 L299.0,257.2 L299.5,250.2 L300.0,243.7 L300.5,237.1 L301.0,231.0 L301.5,225.9 L302.0,222.1 L302.5,219.0 L303.0,216.4 L303.5,214.5 L304.0,213.4 L304.5,212.6 L305.0,212.0 L305.5,211.5 L306.0,210.9 L306.5,210.3 L307.0,209.8 L307.5,209.3 L308.0,208.7 L308.5,207.9 L309.0,206.8 L309.5,205.4 L310.0,204.4 L310.5,204.3 L311.0,205.1 L311.5,206.1 L312.0,207.2 L312.5,207.9 L313.0,208.5 L313.5,209.0 L314.0,209.6 L314.5,210.2 L315.0,211.0 L315.5,211.8 L316.0,212.7 L316.5,213.6 L317.0,214.6 L317.5,215.5 L318.0,216.3 L318.5,217.0 L319.0,217.7 L319.5,218.6 L320.0,219.7 L320.5,221.2 L321.0,224.2 L321.5,228.3 L322.0,232.8 L322.5,237.8 L323.0,243.6 L323.5,250.3 L324.0,258.7 L324.5,268.4 L325.0,278.7 L325.5,289.1 L326.0,299.5 L326.5,310.5 L327.0,321.3 L327.5,331.3 L328.0,340.6 L328.5,350.0 L329.0,358.1 L329.5,363.8 L330.0,366.9 L330.5,369.2 L331.0,371.1 L331.5,372.7 L332.0,374.6 L332.5,376.5 L333.0,378.3 L333.5,380.1 L334.0,382.2 L334.5,384.9 L335.0,389.1 L335.5,395.7 L336.0,403.7 L336.5,412.2 L337.0,420.5 L337.5,429.5 L338.0,439.2 L338.5,448.8 L339.0,457.6 L339.5,465.5 L340.0,472.9 L340.5,480.0 L341.0,486.8 L341.5,493.4 L342.0,500.0 L342.5,506.9 L343.0,514.4 L343.5,521.2 L344.0,526.2 L344.5,528.9 L345.0,530.8 L345.5,532.3 L346.0,533.4 L346.5,534.1 L347.0,534.6 L347.5,535.1 L348.0,535.4 L348.5,535.7 L349.0,536.1 L349.5,536.5 L350.0,537.0 L350.5,537.8 L351.0,538.8 L351.5,539.9 L352.0,540.9 L352.5,541.7 L353.0,542.2 L353.5,542.3 L354.0,542.0 L354.5,541.4 L355.0,540.6 L355.5,539.8 L356.0,538.9 L356.5,538.1 L357.0,537.5 L357.5,536.9 L358.0,536.5 L358.5,535.9 L359.0,535.3 L359.5,534.6 L360.0,533.8 L360.5,532.9 L361.0,531.8 L361.5,530.4 L362.0,528.6 L362.5,526.4 L363.0,520.6 L363.5,511.5 L364.0,502.1 L364.5,494.0 L365.0,485.8 L365.5,477.5 L366.0,468.9 L366.5,460.1 L367.0,450.8 L367.5,440.8 L368.0,430.8 L368.5,421.4 L369.0,413.0 L369.5,404.4 L370.0,396.4 L370.5,389.7 L371.0,385.2 L371.5,382.4 L372.0,380.3 L372.5,378.5 L373.0,376.7 L373.5,374.8 L374.0,372.9 L374.5,371.1 L375.0,369.2 L375.5,367.0 L376.0,364.2 L376.5,360.4 L377.0,355.3 L377.5,349.5 L378.0,343.0 L378.5,336.4 L379.0,329.7 L379.5,322.4 L380.0,314.5 L380.5,306.3 L381.0,298.2 L381.5,290.3 L382.0,282.5 L382.5,274.7 L383.0,266.9 L383.5,259.3 L384.0,252.2 L384.5,245.6 L385.0,239.0 L385.5,232.7 L386.0,227.3 L386.5,223.1 L387.0,219.9 L387.5,217.2 L388.0,215.0 L388.5,213.7 L389.0,212.9 L389.5,212.2 L390.0,211.7 L390.5,211.1 L391.0,210.5 L391.5,210.0 L392.0,209.4 L392.5,208.9 L393.0,208.2 L393.5,207.2 L394.0,205.8 L394.5,204.6 L395.0,204.3 L395.5,204.8 L396.0,205.8 L396.5,206.9 L397.0,207.7 L397.5,208.3 L398.0,208.9 L398.5,209.4 L399.0,210.0 L399.5,210.7 L400.0,211.5 L400.5,212.4 L401.0,213.4 L401.5,214.3 L402.0,215.2 L402.5,216.1 L403.0,216.8 L403.5,217.5 L404.0,218.3 L404.5,219.3 L405.0,220.6 L405.5,223.1 L406.0,227.0 L406.5,231.5 L407.0,236.2 L407.5,241.7 L408.0,248.2 L408.5,256.0 L409.0,265.4 L409.5,275.6 L410.0,286.0 L410.5,296.3 L411.0,307.2 L411.5,318.1 L412.0,328.5 L412.5,337.8 L413.0,347.2 L413.5,355.9 L414.0,362.4 L414.5,366.1 L415.0,368.6 L415.5,370.5 L416.0,372.2 L416.5,374.0 L417.0,376.0 L417.5,377.8 L418.0,379.5 L418.5,381.5 L419.0,384.0 L419.5,387.6 L420.0,393.5 L420.5,401.2 L421.0,409.6 L421.5,418.0 L422.0,426.7 L422.5,436.3 L423.0,445.9 L423.5,455.1 L424.0,463.2 L424.5,470.7 L425.0,477.9 L425.5,484.8 L426.0,491.4 L426.5,498.0 L427.0,504.7 L427.5,512.1 L428.0,519.3 L428.5,525.0 L429.0,528.2 L429.5,530.2 L430.0,531.9 L430.5,533.1 L431.0,533.9 L431.5,534.5 L432.0,534.9 L432.5,535.3 L433.0,535.6 L433.5,536.0 L434.0,536.4 L434.5,536.8 L435.0,537.6 L435.5,538.5 L436.0,539.6 L436.5,540.6 L437.0,541.5 L437.5,542.1 L438.0,542.3 L438.5,542.1 L439.0,541.6 L439.5,540.9 L440.0,540.0 L440.5,539.1 L441.0,538.3 L441.5,537.6 L442.0,537.1 L442.5,536.6 L443.0,536.1 L443.5,535.5 L444.0,534.8 L444.5,534.0 L445.0,533.2 L445.5,532.1 L446.0,530.8 L446.5,529.2 L447.0,527.1 L447.5,522.8 L448.0,514.4 L448.5,504.8 L449.0,496.4 L449.5,488.3 L450.0,480.0 L450.5,471.5 L451.0,462.8 L451.5,453.7 L452.0,443.8 L452.5,433.8 L453.0,424.2 L453.5,415.5 L454.0,407.0 L454.5,398.7 L455.0,391.5 L455.5,386.3 L456.0,383.2 L456.5,380.9 L457.0,379.0 L457.5,377.3 L458.0,375.4 L458.5,373.4 L459.0,371.6 L459.5,369.8 L460.0,367.7 L460.5,365.1 L461.0,361.7 L461.5,357.0 L462.0,351.3 L462.5,345.0 L463.0,338.4 L463.5,331.8 L464.0,324.6 L464.5,316.9 L465.0,308.8 L465.5,300.6 L466.0,292.6 L466.5,284.9 L467.0,277.0 L467.5,269.2 L468.0,261.6 L468.5,254.3 L469.0,247.6 L469.5,241.0 L470.0,234.6 L470.5,228.8 L471.0,224.2 L471.5,220.8 L472.0,217.9 L472.5,215.6 L473.0,214.0 L473.5,213.1 L474.0,212.4 L474.5,211.8 L475.0,211.3 L475.5,210.7 L476.0,210.1 L476.5,209.6 L477.0,209.0 L477.5,208.4 L478.0,207.5 L478.5,206.2 L479.0,204.9 L479.5,204.2 L480.0,204.6 L480.5,205.5 L481.0,206.6 L481.5,207.5 L482.0,208.2 L482.5,208.7 L483.0,209.2 L483.5,209.8 L484.0,210.5 L484.5,211.3 L485.0,212.2 L485.5,213.1 L486.0,214.0 L486.5,215.0 L487.0,215.9 L487.5,216.6 L488.0,217.3 L488.5,218.1 L489.0,219.0 L489.5,220.2 L490.0,222.2 L490.5,225.7 L491.0,230.1 L491.5,234.7 L492.0,240.0 L492.5,246.1 L493.0,253.5 L493.5,262.5 L494.0,272.5 L494.5,282.9 L495.0,293.1 L495.5,303.9 L496.0,314.9 L496.5,325.5 L497.0,335.0 L497.5,344.4 L498.0,353.4 L498.5,360.7 L499.0,365.2 L499.5,367.9 L500.0,370.0 L500.5,371.7 L501.0,373.4 L501.5,375.4 L502.0,377.3 L502.5,379.0 L503.0,380.9 L503.5,383.2 L504.0,386.3 L504.5,391.5 L505.0,398.8 L505.5,407.1 L506.0,415.5 L506.5,424.0 L507.0,433.4 L507.5,443.1 L508.0,452.4 L508.5,460.8 L509.0,468.5 L509.5,475.8 L510.0,482.7 L510.5,489.5 L511.0,496.1 L511.5,502.7 L512.0,509.9 L512.5,517.2 L513.0,523.5 L513.5,527.5 L514.0,529.7 L514.5,531.4 L515.0,532.7 L515.5,533.7 L516.0,534.3 L516.5,534.8 L517.0,535.2 L517.5,535.5 L518.0,535.9 L518.5,536.2 L519.0,536.7 L519.5,537.3 L520.0,538.2 L520.5,539.2 L521.0,540.3 L521.5,541.2 L522.0,541.9 L522.5,542.3 L523.0,542.2 L523.5,541.8 L524.0,541.1 L524.5,540.3 L525.0,539.4 L525.5,538.6 L526.0,537.8 L526.5,537.2 L527.0,536.7 L527.5,536.3 L528.0,535.7 L528.5,535.0 L529.0,534.3 L529.5,533.4 L530.0,532.5 L530.5,531.2 L531.0,529.7 L531.5,527.8 L532.0,524.6 L532.5,517.1 L533.0,507.6 L533.5,498.9 L534.0,490.7 L534.5,482.5 L535.0,474.1 L535.5,465.4 L536.0,456.5 L536.5,446.8 L537.0,436.8 L537.5,427.0 L538.0,418.0 L538.5,409.6 L539.0,401.1 L539.5,393.5 L540.0,387.6 L540.5,384.0 L541.0,381.5 L541.5,379.5 L542.0,377.8 L542.5,376.0 L543.0,374.0 L543.5,372.1 L544.0,370.3 L544.5,368.3 L545.0,365.9 L545.5,362.8 L546.0,358.5 L546.5,353.1 L547.0,346.9 L547.5,340.4 L548.0,333.7 L548.5,326.9 L549.0,319.3 L549.5,311.2 L550.0,303.0 L550.5,295.0 L551.0,287.2 L551.5,279.4 L552.0,271.5 L552.5,263.8 L553.0,256.4 L553.5,249.6 L554.0,243.0 L554.5,236.4 L555.0,230.4 L555.5,225.4 L556.0,221.8 L556.5,218.7 L557.0,216.2 L557.5,214.4 L558.0,213.3 L558.5,212.6 L559.0,212.0 L559.5,211.4 L560.0,210.9 L560.5,210.3 L561.0,209.8 L561.5,209.2 L562.0,208.6 L562.5,207.9 L563.0,206.6 L563.5,205.3 L564.0,204.3 L564.5,204.4 L565.0,205.2 L565.5,206.3 L566.0,207.3 L566.5,208.0 L567.0,208.6 L567.5,209.1 L568.0,209.6 L568.5,210.3 L569.0,211.0 L569.5,211.9 L570.0,212.8 L570.5,213.7 L571.0,214.7 L571.5,215.6 L572.0,216.4 L572.5,217.1 L573.0,217.8 L573.5,218.7 L574.0,219.8 L574.5,221.4 L575.0,224.5 L575.5,228.8 L576.0,233.3 L576.5,238.3 L577.0,244.2 L577.5,251.1 L578.0,259.6 L578.5,269.4 L579.0,279.8 L579.5,290.1 L580.0,300.6 L580.5,311.6 L581.0,322.4 L581.5,332.2 L582.0,341.6 L582.5,350.9 L583.0,358.8 L583.5,364.2 L584.0,367.2 L584.5,369.4 L585.0,371.2 L585.5,372.9 L586.0,374.8 L586.5,376.7 L587.0,378.5 L587.5,380.3 L588.0,382.4 L588.5,385.2 L589.0,389.7 L589.5,396.4 L590.0,404.5 L590.5,413.0 L591.0,421.3 L591.5,430.5 L592.0,440.2 L592.5,449.7 L593.0,458.4 L593.5,466.2 L594.0,473.6 L594.5,480.7 L595.0,487.5 L595.5,494.1 L596.0,500.7 L596.5,507.7 L597.0,515.1 L597.5,521.8 L598.0,526.6 L598.5,529.1 L599.0,530.9 L599.5,532.4 L600.0,533.4 L600.5,534.2 L601.0,534.7 L601.5,535.1 L602.0,535.4 L602.5,535.8 L603.0,536.1 L603.5,536.5 L604.0,537.1 L604.5,537.9 L605.0,538.9 L605.5,540.0 L606.0,541.0 L606.5,541.7 L607.0,542.2 L607.5,542.2 L608.0,541.9 L608.5,541.3 L609.0,540.5 L609.5,539.7 L610.0,538.8 L610.5,538.0 L611.0,537.4 L611.5,536.9 L612.0,536.4 L612.5,535.9 L613.0,535.2 L613.5,534.5 L614.0,533.7 L614.5,532.8 L615.0,531.6 L615.5,530.2 L616.0,528.4 L616.5,526.0 L617.0,519.7 L617.5,510.5 L618.0,501.3 L618.5,493.2 L619.0,485.0 L619.5,476.6 L620.0,468.1 L620.5,459.2 L621.0,449.8 L621.5,439.8 L622.0,429.8 L622.5,420.6 L623.0,412.1 L623.5,403.6 L624.0,395.6 L624.5,389.1 L625.0,384.9 L625.5,382.2 L626.0,380.1 L626.5,378.3 L627.0,376.5 L627.5,374.6 L628.0,372.7 L628.5,370.9 L629.0,369.0 L629.5,366.7 L630.0,363.9 L630.5,359.9 L631.0,354.8 L631.5,348.8 L632.0,342.4 L632.5,335.7 L633.0,329.0 L633.5,321.6 L634.0,313.7 L634.5,305.5 L635.0,297.3 L635.5,289.5 L636.0,281.7 L636.5,273.9 L637.0,266.1 L637.5,258.6 L638.0,251.6 L638.5,245.0 L639.0,238.4 L639.5,232.1 L640.0,226.8 L640.5,222.8 L641.0,219.6 L641.5,216.9 L642.0,214.9 L642.5,213.6 L643.0,212.8 L643.5,212.2 L644.0,211.6 L644.5,211.0 L645.0,210.4 L645.5,209.9 L646.0,209.4 L646.5,208.8 L647.0,208.1 L647.5,207.0 L648.0,205.7 L648.5,204.5 L649.0,204.3 L649.5,204.9 L650.0,205.9 L650.5,207.0 L651.0,207.8 L651.5,208.4 L652.0,208.9 L652.5,209.5 L653.0,210.1 L653.5,210.8 L654.0,211.6 L654.5,212.5 L655.0,213.5 L655.5,214.4 L656.0,215.3 L656.5,216.2 L657.0,216.9 L657.5,217.6 L658.0,218.4 L658.5,219.4 L659.0,220.8 L659.5,223.4 L660.0,227.4 L660.5,231.9 L661.0,236.7 L661.5,242.3 L662.0,248.9 L662.5,256.9 L663.0,266.4 L663.5,276.6 L664.0,287.1 L664.5,297.3 L665.0,308.3 L665.5,319.2 L666.0,329.4 L666.5,338.7 L667.0,348.2 L667.5,356.6 L668.0,362.9 L668.5,366.4 L669.0,368.8 L669.5,370.7 L670.0,372.4 L670.5,374.2" stroke="#e02222"/>
</g>
<!-- axes -->
<g stroke="#1a1a1a">
<line x1="65.5" y1="164.2" x2="65.5" y2="585.7" stroke-width="1.6"/>
<line x1="57" y1="164.2" x2="65.5" y2="164.2" stroke-width="1.5"/>
<line x1="60.5" y1="172.6" x2="65.5" y2="172.6" stroke-width="1.3"/>
<line x1="60.5" y1="181.1" x2="65.5" y2="181.1" stroke-width="1.3"/>
<line x1="60.5" y1="189.5" x2="65.5" y2="189.5" stroke-width="1.3"/>
<line x1="60.5" y1="197.9" x2="65.5" y2="197.9" stroke-width="1.3"/>
<line x1="57" y1="206.3" x2="65.5" y2="206.3" stroke-width="1.5"/>
<line x1="60.5" y1="214.8" x2="65.5" y2="214.8" stroke-width="1.3"/>
<line x1="60.5" y1="223.2" x2="65.5" y2="223.2" stroke-width="1.3"/>
<line x1="60.5" y1="231.6" x2="65.5" y2="231.6" stroke-width="1.3"/>
<line x1="60.5" y1="240.1" x2="65.5" y2="240.1" stroke-width="1.3"/>
<line x1="57" y1="248.5" x2="65.5" y2="248.5" stroke-width="1.5"/>
<line x1="60.5" y1="256.9" x2="65.5" y2="256.9" stroke-width="1.3"/>
<line x1="60.5" y1="265.4" x2="65.5" y2="265.4" stroke-width="1.3"/>
<line x1="60.5" y1="273.8" x2="65.5" y2="273.8" stroke-width="1.3"/>
<line x1="60.5" y1="282.2" x2="65.5" y2="282.2" stroke-width="1.3"/>
<line x1="57" y1="290.6" x2="65.5" y2="290.6" stroke-width="1.5"/>
<line x1="60.5" y1="299.1" x2="65.5" y2="299.1" stroke-width="1.3"/>
<line x1="60.5" y1="307.5" x2="65.5" y2="307.5" stroke-width="1.3"/>
<line x1="60.5" y1="315.9" x2="65.5" y2="315.9" stroke-width="1.3"/>
<line x1="60.5" y1="324.4" x2="65.5" y2="324.4" stroke-width="1.3"/>
<line x1="57" y1="332.8" x2="65.5" y2="332.8" stroke-width="1.5"/>
<line x1="60.5" y1="341.2" x2="65.5" y2="341.2" stroke-width="1.3"/>
<line x1="60.5" y1="349.7" x2="65.5" y2="349.7" stroke-width="1.3"/>
<line x1="60.5" y1="358.1" x2="65.5" y2="358.1" stroke-width="1.3"/>
<line x1="60.5" y1="366.5" x2="65.5" y2="366.5" stroke-width="1.3"/>
<line x1="57" y1="374.9" x2="65.5" y2="374.9" stroke-width="1.5"/>
<line x1="60.5" y1="383.4" x2="65.5" y2="383.4" stroke-width="1.3"/>
<line x1="60.5" y1="391.8" x2="65.5" y2="391.8" stroke-width="1.3"/>
<line x1="60.5" y1="400.2" x2="65.5" y2="400.2" stroke-width="1.3"/>
<line x1="60.5" y1="408.7" x2="65.5" y2="408.7" stroke-width="1.3"/>
<line x1="57" y1="417.1" x2="65.5" y2="417.1" stroke-width="1.5"/>
<line x1="60.5" y1="425.5" x2="65.5" y2="425.5" stroke-width="1.3"/>
<line x1="60.5" y1="434.0" x2="65.5" y2="434.0" stroke-width="1.3"/>
<line x1="60.5" y1="442.4" x2="65.5" y2="442.4" stroke-width="1.3"/>
<line x1="60.5" y1="450.8" x2="65.5" y2="450.8" stroke-width="1.3"/>
<line x1="57" y1="459.2" x2="65.5" y2="459.2" stroke-width="1.5"/>
<line x1="60.5" y1="467.7" x2="65.5" y2="467.7" stroke-width="1.3"/>
<line x1="60.5" y1="476.1" x2="65.5" y2="476.1" stroke-width="1.3"/>
<line x1="60.5" y1="484.5" x2="65.5" y2="484.5" stroke-width="1.3"/>
<line x1="60.5" y1="493.0" x2="65.5" y2="493.0" stroke-width="1.3"/>
<line x1="57" y1="501.4" x2="65.5" y2="501.4" stroke-width="1.5"/>
<line x1="60.5" y1="509.8" x2="65.5" y2="509.8" stroke-width="1.3"/>
<line x1="60.5" y1="518.3" x2="65.5" y2="518.3" stroke-width="1.3"/>
<line x1="60.5" y1="526.7" x2="65.5" y2="526.7" stroke-width="1.3"/>
<line x1="60.5" y1="535.1" x2="65.5" y2="535.1" stroke-width="1.3"/>
<line x1="57" y1="543.5" x2="65.5" y2="543.5" stroke-width="1.5"/>
<line x1="60.5" y1="552.0" x2="65.5" y2="552.0" stroke-width="1.3"/>
<line x1="60.5" y1="560.4" x2="65.5" y2="560.4" stroke-width="1.3"/>
<line x1="60.5" y1="568.8" x2="65.5" y2="568.8" stroke-width="1.3"/>
<line x1="60.5" y1="577.3" x2="65.5" y2="577.3" stroke-width="1.3"/>
<line x1="57" y1="585.7" x2="65.5" y2="585.7" stroke-width="1.5"/>
<line x1="74.2" y1="595.3" x2="669.5" y2="595.3" stroke-width="1.6"/>
<line x1="84.5" y1="595.3" x2="84.5" y2="599.5" stroke-width="1.3"/>
<line x1="101.0" y1="595.3" x2="101.0" y2="599.5" stroke-width="1.3"/>
<line x1="117.5" y1="595.3" x2="117.5" y2="599.5" stroke-width="1.3"/>
<line x1="134.0" y1="595.3" x2="134.0" y2="603.3" stroke-width="1.5"/>
<line x1="150.5" y1="595.3" x2="150.5" y2="599.5" stroke-width="1.3"/>
<line x1="167.0" y1="595.3" x2="167.0" y2="599.5" stroke-width="1.3"/>
<line x1="183.5" y1="595.3" x2="183.5" y2="599.5" stroke-width="1.3"/>
<line x1="200.0" y1="595.3" x2="200.0" y2="599.5" stroke-width="1.3"/>
<line x1="216.5" y1="595.3" x2="216.5" y2="603.3" stroke-width="1.5"/>
<line x1="233.0" y1="595.3" x2="233.0" y2="599.5" stroke-width="1.3"/>
<line x1="249.5" y1="595.3" x2="249.5" y2="599.5" stroke-width="1.3"/>
<line x1="266.0" y1="595.3" x2="266.0" y2="599.5" stroke-width="1.3"/>
<line x1="282.5" y1="595.3" x2="282.5" y2="599.5" stroke-width="1.3"/>
<line x1="299.0" y1="595.3" x2="299.0" y2="603.3" stroke-width="1.5"/>
<line x1="315.5" y1="595.3" x2="315.5" y2="599.5" stroke-width="1.3"/>
<line x1="332.0" y1="595.3" x2="332.0" y2="599.5" stroke-width="1.3"/>
<line x1="348.5" y1="595.3" x2="348.5" y2="599.5" stroke-width="1.3"/>
<line x1="365.0" y1="595.3" x2="365.0" y2="599.5" stroke-width="1.3"/>
<line x1="381.5" y1="595.3" x2="381.5" y2="603.3" stroke-width="1.5"/>
<line x1="398.0" y1="595.3" x2="398.0" y2="599.5" stroke-width="1.3"/>
<line x1="414.5" y1="595.3" x2="414.5" y2="599.5" stroke-width="1.3"/>
<line x1="431.0" y1="595.3" x2="431.0" y2="599.5" stroke-width="1.3"/>
<line x1="447.5" y1="595.3" x2="447.5" y2="599.5" stroke-width="1.3"/>
<line x1="464.0" y1="595.3" x2="464.0" y2="603.3" stroke-width="1.5"/>
<line x1="480.5" y1="595.3" x2="480.5" y2="599.5" stroke-width="1.3"/>
<line x1="497.0" y1="595.3" x2="497.0" y2="599.5" stroke-width="1.3"/>
<line x1="513.5" y1="595.3" x2="513.5" y2="599.5" stroke-width="1.3"/>
<line x1="530.0" y1="595.3" x2="530.0" y2="599.5" stroke-width="1.3"/>
<line x1="546.5" y1="595.3" x2="546.5" y2="603.3" stroke-width="1.5"/>
<line x1="563.0" y1="595.3" x2="563.0" y2="599.5" stroke-width="1.3"/>
<line x1="579.5" y1="595.3" x2="579.5" y2="599.5" stroke-width="1.3"/>
<line x1="596.0" y1="595.3" x2="596.0" y2="599.5" stroke-width="1.3"/>
<line x1="612.5" y1="595.3" x2="612.5" y2="599.5" stroke-width="1.3"/>
<line x1="629.0" y1="595.3" x2="629.0" y2="603.3" stroke-width="1.5"/>
<line x1="645.5" y1="595.3" x2="645.5" y2="599.5" stroke-width="1.3"/>
<line x1="662.0" y1="595.3" x2="662.0" y2="599.5" stroke-width="1.3"/>
</g>
<rect x="39.5" y="416.2" width="4.3" height="1.6" fill="#222"/>
<rect x="39.5" y="458.4" width="4.3" height="1.6" fill="#222"/>
<rect x="39.5" y="500.5" width="4.3" height="1.6" fill="#222"/>
<rect x="39.5" y="542.6" width="4.3" height="1.6" fill="#222"/>
<rect x="39.5" y="584.8" width="4.3" height="1.6" fill="#222"/>
<!-- lcd digits -->
<g fill="#0a0a0a">
<polygon points="949.4,458.2 965.0,458.2 962.7,460.5 951.7,460.5"/>
<polygon points="965.9,459.1 963.6,461.4 963.6,474.9 965.9,476.0"/>
<polygon points="965.9,477.8 963.6,478.9 963.6,492.4 965.9,494.7"/>
<polygon points="949.4,495.6 965.0,495.6 962.7,493.3 951.7,493.3"/>
<polygon points="948.5,477.8 950.8,478.9 950.8,492.4 948.5,494.7"/>
<polygon points="948.5,459.1 950.8,461.4 950.8,474.9 948.5,476.0"/>
<polygon points="949.4,476.9 950.5,475.8 963.9,475.8 965.0,476.9 963.9,478.0 950.5,478.0"/>
<polygon points="927.4,458.2 943.0,458.2 940.7,460.5 929.7,460.5"/>
<polygon points="943.9,459.1 941.6,461.4 941.6,474.9 943.9,476.0"/>
<polygon points="943.9,477.8 941.6,478.9 941.6,492.4 943.9,494.7"/>
<polygon points="927.4,495.6 943.0,495.6 940.7,493.3 929.7,493.3"/>
<polygon points="926.5,477.8 928.8,478.9 928.8,492.4 926.5,494.7"/>
<polygon points="926.5,459.1 928.8,461.4 928.8,474.9 926.5,476.0"/>
<polygon points="927.4,476.9 928.5,475.8 941.9,475.8 943.0,476.9 941.9,478.0 928.5,478.0"/>
<polygon points="905.4,458.2 921.0,458.2 918.7,460.5 907.7,460.5"/>
<polygon points="921.9,459.1 919.6,461.4 919.6,474.9 921.9,476.0"/>
<polygon points="905.4,476.9 906.5,475.8 919.9,475.8 921.0,476.9 919.9,478.0 906.5,478.0"/>
<polygon points="921.9,477.8 919.6,478.9 919.6,492.4 921.9,494.7"/>
<polygon points="905.4,495.6 921.0,495.6 918.7,493.3 907.7,493.3"/>
<polygon points="949.4,542.4 965.0,542.4 962.7,544.7 951.7,544.7"/>
<polygon points="965.9,543.3 963.6,545.6 963.6,559.0 965.9,560.2"/>
<polygon points="965.9,562.0 963.6,563.1 963.6,576.6 965.9,578.9"/>
<polygon points="949.4,579.8 965.0,579.8 962.7,577.5 951.7,577.5"/>
<polygon points="948.5,562.0 950.8,563.1 950.8,576.6 948.5,578.9"/>
<polygon points="948.5,543.3 950.8,545.6 950.8,559.0 948.5,560.2"/>
<polygon points="927.4,542.4 943.0,542.4 940.7,544.7 929.7,544.7"/>
<polygon points="943.9,543.3 941.6,545.6 941.6,559.0 943.9,560.2"/>
<polygon points="927.4,561.1 928.5,559.9 941.9,559.9 943.0,561.1 941.9,562.2 928.5,562.2"/>
<polygon points="926.5,562.0 928.8,563.1 928.8,576.6 926.5,578.9"/>
<polygon points="927.4,579.8 943.0,579.8 940.7,577.5 929.7,577.5"/>
<polygon points="966.1,627.5 963.8,629.8 963.8,643.2 966.1,644.4"/>
<polygon points="966.1,646.2 963.8,647.3 963.8,660.8 966.1,663.1"/>
</g>
<!-- rotated axis title -->
<text transform="translate(33.8,419.8) rotate(-90)" x="0" y="0" font-size="16" font-weight="bold" fill="#111" textLength="92.4" lengthAdjust="spacingAndGlyphs">Current [A]</text>
<!-- cursor -->
<line x1="695.5" y1="526" x2="695.5" y2="539" stroke="#000" stroke-width="1"/>
<text x="26.2" y="14.8" font-size="12.3" font-weight="normal" fill="#202020" textLength="61.8" lengthAdjust="spacingAndGlyphs" stroke="#202020" stroke-width="0.15">MOTOR GUI</text>
<text x="6.0" y="39.9" font-size="12" font-weight="normal" fill="#202020" textLength="17.5" lengthAdjust="spacingAndGlyphs" stroke="#202020" stroke-width="0.4">File</text>
<text x="16.1" y="67.0" font-size="11" font-weight="bold" fill="#1a1a1a" textLength="51.4" lengthAdjust="spacingAndGlyphs" stroke="#1a1a1a" stroke-width="0.25">COM Port</text>
<text x="16.5" y="103.0" font-size="11" font-weight="bold" fill="#1a1a1a" textLength="56.0" lengthAdjust="spacingAndGlyphs" stroke="#1a1a1a" stroke-width="0.25">COM port:</text>
<text x="160.5" y="103.2" font-size="11" font-weight="bold" fill="#1a1a1a" textLength="32.6" lengthAdjust="spacingAndGlyphs" stroke="#1a1a1a" stroke-width="0.25">COM8</text>
<text x="16.0" y="144.1" font-size="11" font-weight="bold" fill="#1a1a1a" textLength="59.0" lengthAdjust="spacingAndGlyphs" stroke="#1a1a1a" stroke-width="0.25">Graph Plot</text>
<text x="684.5" y="263.6" font-size="11.3" font-weight="bold" fill="#1a1a1a" textLength="115.7" lengthAdjust="spacingAndGlyphs" stroke="#1a1a1a" stroke-width="0.25">Current limit min [A]</text>
<text x="688.4" y="281.0" font-size="11" font-weight="bold" fill="#1a1a1a" textLength="11.0" lengthAdjust="spacingAndGlyphs" stroke="#1a1a1a" stroke-width="0.25">-5</text>
<text x="684.5" y="391.8" font-size="11.3" font-weight="bold" fill="#1a1a1a" textLength="120.0" lengthAdjust="spacingAndGlyphs" stroke="#1a1a1a" stroke-width="0.25">Current limit max [A]</text>
<text x="688.4" y="409.4" font-size="11" font-weight="bold" fill="#1a1a1a" textLength="6.5" lengthAdjust="spacingAndGlyphs" stroke="#1a1a1a" stroke-width="0.25">5</text>
<text x="684.5" y="519.6" font-size="11.3" font-weight="bold" fill="#1a1a1a" textLength="92.0" lengthAdjust="spacingAndGlyphs" stroke="#1a1a1a" stroke-width="0.25">Current step [A]</text>
<text x="689.0" y="537.6" font-size="11" font-weight="bold" fill="#1a1a1a" textLength="6.0" lengthAdjust="spacingAndGlyphs" stroke="#1a1a1a" stroke-width="0.25">1</text>
<text x="880.0" y="204.8" font-size="12.5" font-weight="bold" fill="#0a2a0a" textLength="77.0" lengthAdjust="spacingAndGlyphs" stroke="#0a2a0a" stroke-width="0.25">Motor Start</text>
<text x="882.4" y="295.3" font-size="12.5" font-weight="bold" fill="#2a0000" textLength="73.2" lengthAdjust="spacingAndGlyphs" stroke="#2a0000" stroke-width="0.25">Motor Stop</text>
<text x="852.0" y="443.8" font-size="11.3" font-weight="bold" fill="#1a1a1a" textLength="107.5" lengthAdjust="spacingAndGlyphs" stroke="#1a1a1a" stroke-width="0.25">DC Link Voltage [V]</text>
<text x="852.7" y="527.8" font-size="11.3" font-weight="bold" fill="#1a1a1a" textLength="124.2" lengthAdjust="spacingAndGlyphs" stroke="#1a1a1a" stroke-width="0.25">Voltage Amplitude [V]</text>
<text x="852.5" y="612.3" font-size="11.3" font-weight="bold" fill="#1a1a1a" textLength="132.7" lengthAdjust="spacingAndGlyphs" stroke="#1a1a1a" stroke-width="0.25">Voltage Frequency [Hz]</text>
<text x="176.7" y="679.4" font-size="11.8" font-weight="bold" fill="#0a400a" textLength="120.1" lengthAdjust="spacingAndGlyphs" stroke="#0a400a" stroke-width="0.25">Data receiving start</text>
<text x="555.9" y="679.4" font-size="11.8" font-weight="bold" fill="#400000" textLength="119.0" lengthAdjust="spacingAndGlyphs" stroke="#400000" stroke-width="0.25">Data receiving stop</text>
<text x="16.1" y="721.8" font-size="11.3" font-weight="bold" fill="#1a1a1a" textLength="234.4" lengthAdjust="spacingAndGlyphs" stroke="#1a1a1a" stroke-width="0.25">Voltage Amplitude and Frequency Update</text>
<text x="16.8" y="744.7" font-size="11.3" font-weight="bold" fill="#1a1a1a" textLength="104.9" lengthAdjust="spacingAndGlyphs" stroke="#1a1a1a" stroke-width="0.25">Voltage Amplitude</text>
<text x="174.0" y="744.7" font-size="11.3" font-weight="bold" fill="#1a1a1a" textLength="105.4" lengthAdjust="spacingAndGlyphs" stroke="#1a1a1a" stroke-width="0.25">Voltage Frequency</text>
<text x="21.5" y="761.7" font-size="11" font-weight="bold" fill="#1a1a1a" textLength="12.5" lengthAdjust="spacingAndGlyphs" stroke="#1a1a1a" stroke-width="0.25">20</text>
<text x="178.5" y="761.7" font-size="11" font-weight="bold" fill="#1a1a1a" textLength="6.0" lengthAdjust="spacingAndGlyphs" stroke="#1a1a1a" stroke-width="0.25">1</text>
<text x="0.5" y="801.6" font-size="12" font-weight="normal" fill="#202020" textLength="87.2" lengthAdjust="spacingAndGlyphs" stroke="#202020" stroke-width="0.15">Monitor running</text>
<text x="96.9" y="838.1" font-size="18" font-weight="bold" fill="#111111" textLength="785.0" lengthAdjust="spacingAndGlyphs" stroke="#111" stroke-width="0.3">Figure 2. Graphical user Interface for Controlling The motor in the Open Loop</text>
<text x="825.0" y="838.5" font-size="18.7" font-weight="normal" fill="#62a048" textLength="161.0" lengthAdjust="spacingAndGlyphs" opacity="0.33">www.cntronics.com</text>
<text x="352.4" y="635.6" font-size="16" font-weight="bold" fill="#111111" textLength="40.2" lengthAdjust="spacingAndGlyphs">Time</text>
<text x="52.4" y="168.5" font-size="12" font-weight="bold" fill="#111111" text-anchor="end" stroke="#111111" stroke-width="0.25">5</text>
<text x="52.4" y="210.7" font-size="12" font-weight="bold" fill="#111111" text-anchor="end" stroke="#111111" stroke-width="0.25">4</text>
<text x="52.4" y="252.8" font-size="12" font-weight="bold" fill="#111111" text-anchor="end" stroke="#111111" stroke-width="0.25">3</text>
<text x="52.4" y="294.9" font-size="12" font-weight="bold" fill="#111111" text-anchor="end" stroke="#111111" stroke-width="0.25">2</text>
<text x="52.4" y="337.1" font-size="12" font-weight="bold" fill="#111111" text-anchor="end" stroke="#111111" stroke-width="0.25">1</text>
<text x="52.4" y="379.2" font-size="12" font-weight="bold" fill="#111111" text-anchor="end" stroke="#111111" stroke-width="0.25">0</text>
<text x="52.4" y="421.4" font-size="12" font-weight="bold" fill="#111111" text-anchor="end" stroke="#111111" stroke-width="0.25">1</text>
<text x="52.4" y="463.6" font-size="12" font-weight="bold" fill="#111111" text-anchor="end" stroke="#111111" stroke-width="0.25">2</text>
<text x="52.4" y="505.7" font-size="12" font-weight="bold" fill="#111111" text-anchor="end" stroke="#111111" stroke-width="0.25">3</text>
<text x="52.4" y="547.8" font-size="12" font-weight="bold" fill="#111111" text-anchor="end" stroke="#111111" stroke-width="0.25">4</text>
<text x="52.4" y="590.0" font-size="12" font-weight="bold" fill="#111111" text-anchor="end" stroke="#111111" stroke-width="0.25">5</text>
<text x="122.3" y="618.2" font-size="12" font-weight="bold" fill="#111111" textLength="23.4" lengthAdjust="spacingAndGlyphs" stroke="#111111" stroke-width="0.25">101</text>
<text x="204.8" y="618.2" font-size="12" font-weight="bold" fill="#111111" textLength="23.4" lengthAdjust="spacingAndGlyphs" stroke="#111111" stroke-width="0.25">102</text>
<text x="287.3" y="618.2" font-size="12" font-weight="bold" fill="#111111" textLength="23.4" lengthAdjust="spacingAndGlyphs" stroke="#111111" stroke-width="0.25">103</text>
<text x="369.8" y="618.2" font-size="12" font-weight="bold" fill="#111111" textLength="23.4" lengthAdjust="spacingAndGlyphs" stroke="#111111" stroke-width="0.25">104</text>
<text x="452.3" y="618.2" font-size="12" font-weight="bold" fill="#111111" textLength="23.4" lengthAdjust="spacingAndGlyphs" stroke="#111111" stroke-width="0.25">105</text>
<text x="534.8" y="618.2" font-size="12" font-weight="bold" fill="#111111" textLength="23.4" lengthAdjust="spacingAndGlyphs" stroke="#111111" stroke-width="0.25">106</text>
<text x="617.3" y="618.2" font-size="12" font-weight="bold" fill="#111111" textLength="23.4" lengthAdjust="spacingAndGlyphs" stroke="#111111" stroke-width="0.25">107</text>
</svg>
</body></html>
